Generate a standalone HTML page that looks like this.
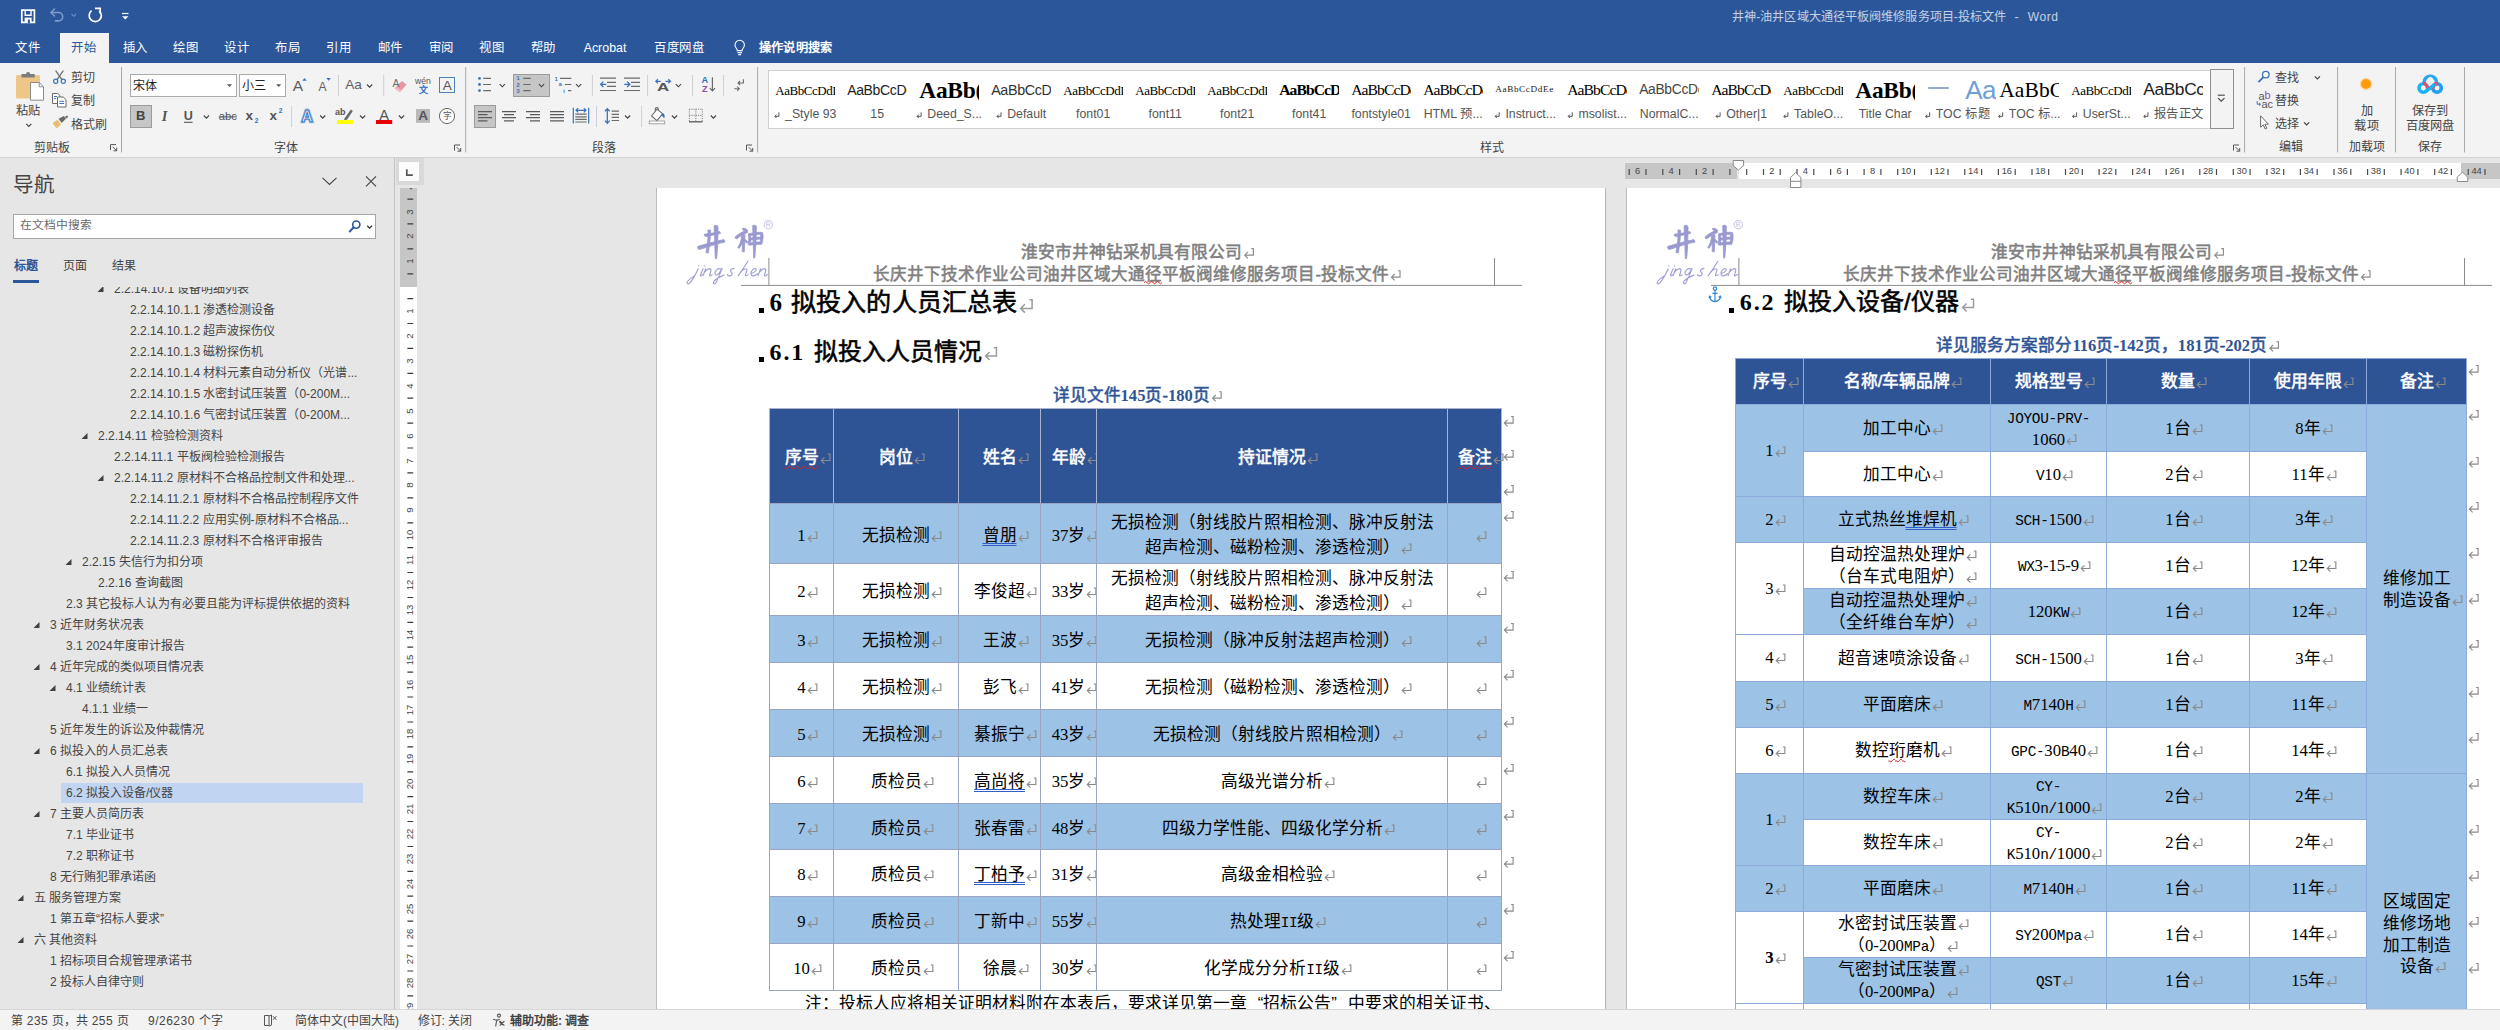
<!DOCTYPE html><html lang="zh-CN"><head><meta charset="utf-8"><title>Word</title><style>

*{box-sizing:border-box;margin:0;padding:0}
html,body{width:2500px;height:1030px;overflow:hidden;background:#e6e6e6}
body{position:relative;font-family:"Liberation Sans",sans-serif;font-size:12px;color:#444;line-height:1}
.abs{position:absolute}
.t{position:absolute;white-space:nowrap;line-height:1}
.c{position:absolute;white-space:nowrap;line-height:1;transform:translate(-50%,-50%)}
.l{position:absolute;white-space:nowrap;line-height:1;transform:translate(0,-50%)}
svg{position:absolute;overflow:visible}
svg.pm{position:static;display:inline-block;width:.68em;height:.68em;vertical-align:-0.08em;margin-left:.02em;fill:none;stroke:#8a8a8a;stroke-width:1;overflow:visible}
#titlebar{position:absolute;left:0;top:0;width:2500px;height:63px;background:#2b579a}
#ribbon{position:absolute;left:0;top:63px;width:2500px;height:95px;background:#f3f3f3;border-bottom:1px solid #d2d2d2}
#status{position:absolute;left:0;top:1009px;width:2500px;height:21px;background:#f3f3f3;border-top:1px solid #d6d6d6}
.cj{display:inline-block;white-space:nowrap;text-align:justify;text-align-last:justify;letter-spacing:0;vertical-align:baseline}
.cj1{display:inline-block;min-width:1em;text-align:center;letter-spacing:0;vertical-align:baseline}
.serif{font-family:"Liberation Serif",serif}
.mono{font-family:"Liberation Mono",monospace}


.page{position:absolute;background:#fff;overflow:hidden;border-left:1px solid #bdbdbd;border-right:1px solid #b4b4b4}
.cell{position:absolute;display:flex;align-items:center;justify-content:center;text-align:center;border:1px solid;
 font-family:"Liberation Sans",sans-serif;font-size:16.7px;color:#000;padding-top:5px;white-space:nowrap;line-height:1;overflow:visible}
.cell.r2{padding-top:1px}
.doc{font-family:"Liberation Sans",sans-serif}
.fq{display:inline-block;width:1em}
.fb{font-weight:normal;-webkit-text-stroke:.55px currentColor}
.fb .sf{font-weight:bold;-webkit-text-stroke:0}
.fb svg.pm{-webkit-text-stroke:0}
.sf{font-family:"Liberation Serif",serif}
.hg{display:inline-block;width:0;overflow:visible;white-space:nowrap;vertical-align:baseline;text-align:left}
.hg svg.pm{margin-left:1px}
.ln{font-family:"Liberation Mono",monospace;font-size:.86em;letter-spacing:-.28px;line-height:1}
svg.pm.g{stroke:#9a9a9a;width:.6em;height:.6em;margin-left:2px}
.du,.du .cj,.du .cj1{text-decoration:underline double #2f5fc4;text-decoration-thickness:1px;text-underline-offset:2px}
.sq,.sq .cj,.sq .cj1{text-decoration:underline wavy #e02020;text-decoration-thickness:1px;text-underline-offset:2px}

</style></head><body>
<div id="titlebar">
<svg style="left:0;top:0" width="200" height="33" viewBox="0 0 200 33">
<path d="M21.8 10.2h12.6v12.2h-12.6z" fill="none" stroke="#fff" stroke-width="1.7"/>
<path d="M25.2 10v5.2h5.8v-5.2" fill="none" stroke="#fff" stroke-width="1.4"/>
<rect x="24.6" y="17.6" width="7" height="5" fill="#fff"/>
<rect x="27.9" y="19.6" width="2" height="3.6" fill="#2b579a"/>
<g fill="none" stroke="#7d9acb" stroke-width="1.6" stroke-linecap="round" stroke-linejoin="round">
<path d="M51 12.5h7.5a4.2 4.2 0 0 1 0 8.4h-3"/>
<path d="M54.5 9 51 12.5 54.5 16"/>
</g>
<path d="M71.5 14l2.3 2.3 2.3-2.3" fill="none" stroke="#6f8fc4" stroke-width="1.1"/>
<g fill="none" stroke="#fff" stroke-width="1.7">
<path d="M91.6 10.6a6.1 6.1 0 1 0 7.6 .2"/>
</g>
<path d="M95 8.4h5.2v5.2" fill="none" stroke="#fff" stroke-width="1.7"/>
<path d="M122 13.5h6.5" stroke="#fff" stroke-width="1.2"/>
<path d="M122 16.2h6.5l-3.25 3.3z" fill="#fff"/>
</svg>
<div class="l" style="left:1732px;top:16.5px;font-size:12.1px;color:#c5d1e6"><span class="cj" style="min-width:2em">井神</span>-<span class="cj" style="min-width:16em">油井区域大通径平板阀维修服务项目</span>-<span class="cj" style="min-width:4em">投标文件</span><span style="letter-spacing:.8px">&nbsp; - &nbsp;</span><span style="letter-spacing:.5px">Word</span></div>
<div class="abs" style="left:60px;top:33px;width:49px;height:30px;background:#f3f3f3"></div>
<div class="c" style="left:27.9px;top:47.7px;font-size:12.4px;color:#fff"><span class="cj" style="min-width:2em">文件</span></div>
<div class="c" style="left:83.6px;top:47.7px;font-size:12.4px;color:#2b579a"><span class="cj" style="min-width:2em">开始</span></div>
<div class="c" style="left:135.0px;top:47.7px;font-size:12.4px;color:#fff"><span class="cj" style="min-width:2em">插入</span></div>
<div class="c" style="left:185.7px;top:47.7px;font-size:12.4px;color:#fff"><span class="cj" style="min-width:2em">绘图</span></div>
<div class="c" style="left:236.7px;top:47.7px;font-size:12.4px;color:#fff"><span class="cj" style="min-width:2em">设计</span></div>
<div class="c" style="left:287.7px;top:47.7px;font-size:12.4px;color:#fff"><span class="cj" style="min-width:2em">布局</span></div>
<div class="c" style="left:338.7px;top:47.7px;font-size:12.4px;color:#fff"><span class="cj" style="min-width:2em">引用</span></div>
<div class="c" style="left:390.0px;top:47.7px;font-size:12.4px;color:#fff"><span class="cj" style="min-width:2em">邮件</span></div>
<div class="c" style="left:441.0px;top:47.7px;font-size:12.4px;color:#fff"><span class="cj" style="min-width:2em">审阅</span></div>
<div class="c" style="left:491.7px;top:47.7px;font-size:12.4px;color:#fff"><span class="cj" style="min-width:2em">视图</span></div>
<div class="c" style="left:543.0px;top:47.7px;font-size:12.4px;color:#fff"><span class="cj" style="min-width:2em">帮助</span></div>
<div class="c" style="left:605.0px;top:47.7px;font-size:12.4px;color:#fff">Acrobat</div>
<div class="c" style="left:679.0px;top:47.7px;font-size:12.4px;color:#fff"><span class="cj" style="min-width:4em">百度网盘</span></div>
<svg style="left:730px;top:36px" width="20" height="24" viewBox="0 0 20 24">
<g fill="none" stroke="#fff" stroke-width="1.1">
<path d="M7.3 14.6c0-2-2.3-2.8-2.3-5.6a4.7 4.7 0 0 1 9.4 0c0 2.8-2.3 3.6-2.3 5.6z"/>
<path d="M7.5 16.6h4.4M8.3 18.6h2.8"/>
</g></svg>
<div class="l" style="left:759px;top:47.5px;font-size:12.2px;color:#fff;font-weight:bold"><span class="cj" style="min-width:6em">操作说明搜索</span></div>
</div>
<div id="ribbon"></div>
<div class="abs" style="left:130px;top:74px;width:107px;height:23px;background:#fff;border:1px solid #ababab"></div>
<div class="abs" style="left:239px;top:74px;width:47px;height:23px;background:#fff;border:1px solid #ababab"></div>
<div class="abs" style="left:439px;top:77px;width:16.3px;height:16.3px;border:1.2px solid #4d82c2"></div>
<div class="abs" style="left:130px;top:105px;width:22px;height:23px;background:#c6c6c6;border:1px solid #9b9b9b"></div>
<div class="abs" style="left:513px;top:74px;width:37px;height:23px;background:#c6c6c6;border:1px solid #9b9b9b"></div>
<div class="abs" style="left:474px;top:105px;width:22px;height:23px;background:#c6c6c6;border:1px solid #9b9b9b"></div>
<div class="abs" style="left:767.5px;top:69.5px;width:1443px;height:59.5px;background:#fff;border:1px solid #d0d0d0;border-right:none"></div>
<div class="abs" style="left:2210px;top:69px;width:23.5px;height:60px;background:#f3f3f3;border:1px solid #8f8f8f"></div>
<div class="abs" style="left:775.2px;top:72px;width:60px;height:36px;overflow:hidden"><div class="l" style="left:0;top:18.3px;font-family:'Liberation Serif',serif;font-size:13px;letter-spacing:-.45px;color:#000">AaBbCcDdI</div></div>
<div class="abs" style="left:847.2px;top:72px;width:60px;height:36px;overflow:hidden"><div class="l" style="left:0;top:18.3px;font-size:14px;color:#222;letter-spacing:-.35px">AaBbCcDc</div></div>
<div class="abs" style="left:919.2px;top:72px;width:60px;height:36px;overflow:hidden"><div class="l" style="left:0;top:18.6px;font-family:'Liberation Serif',serif;font-size:23.4px;font-weight:bold;color:#000;letter-spacing:-.2px">AaBb(</div></div>
<div class="abs" style="left:991.2px;top:72px;width:60px;height:36px;overflow:hidden"><div class="l" style="left:0;top:18.3px;font-size:14.3px;color:#333;letter-spacing:-.35px">AaBbCcD</div></div>
<div class="abs" style="left:1063.2px;top:72px;width:60px;height:36px;overflow:hidden"><div class="l" style="left:0;top:18.3px;font-family:'Liberation Serif',serif;font-size:13px;letter-spacing:-.45px;color:#000">AaBbCcDdI</div></div>
<div class="abs" style="left:1135.2px;top:72px;width:60px;height:36px;overflow:hidden"><div class="l" style="left:0;top:18.3px;font-family:'Liberation Serif',serif;font-size:13px;letter-spacing:-.45px;color:#000">AaBbCcDdI</div></div>
<div class="abs" style="left:1207.2px;top:72px;width:60px;height:36px;overflow:hidden"><div class="l" style="left:0;top:18.3px;font-family:'Liberation Serif',serif;font-size:13px;letter-spacing:-.45px;color:#000">AaBbCcDdI</div></div>
<div class="abs" style="left:1279.2px;top:72px;width:60px;height:36px;overflow:hidden"><div class="l" style="left:0;top:18.3px;font-family:'Liberation Serif',serif;font-size:15.6px;letter-spacing:-.9px;color:#000;font-weight:bold">AaBbCcDc</div></div>
<div class="abs" style="left:1351.2px;top:72px;width:60px;height:36px;overflow:hidden"><div class="l" style="left:0;top:18.3px;font-family:'Liberation Serif',serif;font-size:15.6px;letter-spacing:-.9px;color:#000">AaBbCcDc</div></div>
<div class="abs" style="left:1423.2px;top:72px;width:60px;height:36px;overflow:hidden"><div class="l" style="left:0;top:18.3px;font-family:'Liberation Serif',serif;font-size:15.6px;letter-spacing:-.9px;color:#000">AaBbCcDc</div></div>
<div class="abs" style="left:1495.2px;top:72px;width:60px;height:36px;overflow:hidden"><div class="l" style="left:0;top:18.3px;font-family:'Liberation Serif',serif;font-size:9.2px;color:#222;letter-spacing:.62px">AaBbCcDdEe</div></div>
<div class="abs" style="left:1567.2px;top:72px;width:60px;height:36px;overflow:hidden"><div class="l" style="left:0;top:18.3px;font-family:'Liberation Serif',serif;font-size:15.6px;letter-spacing:-.9px;color:#000">AaBbCcDc</div></div>
<div class="abs" style="left:1639.2px;top:72px;width:60px;height:36px;overflow:hidden"><div class="l" style="left:0;top:18.3px;font-size:13.8px;color:#444;letter-spacing:-.3px">AaBbCcDc</div></div>
<div class="abs" style="left:1711.2px;top:72px;width:60px;height:36px;overflow:hidden"><div class="l" style="left:0;top:18.3px;font-family:'Liberation Serif',serif;font-size:15.6px;letter-spacing:-.9px;color:#000">AaBbCcDc</div></div>
<div class="abs" style="left:1783.2px;top:72px;width:60px;height:36px;overflow:hidden"><div class="l" style="left:0;top:18.3px;font-family:'Liberation Serif',serif;font-size:13px;letter-spacing:-.45px;color:#000">AaBbCcDdI</div></div>
<div class="abs" style="left:1855.2px;top:72px;width:60px;height:36px;overflow:hidden"><div class="l" style="left:0;top:18.6px;font-family:'Liberation Serif',serif;font-size:23.4px;font-weight:bold;color:#000;letter-spacing:-.2px">AaBb(</div></div>
<div class="abs" style="left:1965.2px;top:72px;width:31px;height:36px;overflow:hidden"><div class="l" style="left:0;top:18.3px;font-size:26px;color:#6f9fda;letter-spacing:-.5px;font-weight:normal">Aa</div></div>
<div class="abs" style="left:1999.2px;top:72px;width:60px;height:36px;overflow:hidden"><div class="l" style="left:0;top:18.6px;font-family:'Liberation Serif',serif;font-size:21.5px;color:#000;letter-spacing:.1px">AaBbC</div></div>
<div class="abs" style="left:2071.2px;top:72px;width:60px;height:36px;overflow:hidden"><div class="l" style="left:0;top:18.3px;font-family:'Liberation Serif',serif;font-size:13px;letter-spacing:-.45px;color:#000">AaBbCcDdI</div></div>
<div class="abs" style="left:2143.2px;top:72px;width:60px;height:36px;overflow:hidden"><div class="l" style="left:0;top:18.3px;font-size:17.4px;color:#222;letter-spacing:-.4px">AaBbCc</div></div>
<svg style="left:0;top:0" width="2500" height="160" viewBox="0 0 2500 160"><rect x="16" y="75" width="24" height="23.5" rx="1.5" fill="#edc688"/>
<path d="M21.5 77.5v-3.5h4.5a2.1 2.1 0 0 1 4.2 0h4.5v3.5z" fill="#7d7d7d"/>
<path d="M30.5 82.5h8.7l4.3 4.3v13.4h-13z" fill="#fff" stroke="#8c8c8c" stroke-width="1"/>
<path d="M39.2 82.5v4.3h4.3" fill="none" stroke="#8c8c8c" stroke-width="1"/>
<path d="M26.2 123.9l2.6 2.6 2.6-2.6" fill="none" stroke="#444" stroke-width="1.15"/>
<g fill="none" stroke="#6a6a6a" stroke-width="1.3"><path d="M55.6 70.5l6.5 9.3M63.4 70.5l-6.5 9.3"/></g>
<g fill="none" stroke="#3b73b9" stroke-width="1.2"><circle cx="55.7" cy="81.3" r="2.1"/><circle cx="63.3" cy="81.3" r="2.1"/></g>
<g fill="#fff" stroke="#6a6a6a" stroke-width="1"><path d="M52.5 93.5h5.3l2.2 2.2v7.8h-7.5z"/><path d="M57.5 97h5.8l2.7 2.7v7.3h-8.5z"/></g>
<path d="M54 96.5h3M54 98.7h2.2M59.3 101.3h4.8M59.3 103.5h4.8" stroke="#3b73b9" stroke-width="1" fill="none"/>
<path d="M52.5 123l5-3.2 3.6 4.6-4.6 4z" fill="#e9bd73"/>
<path d="M58.5 118.8l5.3-2.8 2.3 2.5-4.4 4.4z" fill="#6a6a6a"/>
<path d="M65 116.6l2.3-1 .9 1.3-1.8 1.5z" fill="#6a6a6a"/>
<g fill="none" stroke="#555" stroke-width="1"><path d="M110.5 150.1v-5.5h5.5"/><path d="M112.7 146.8l4 4m0-3.2v3.2h-3.2"/></g>
<path d="M121.5 67.0V152.5" stroke="#a9a9a9" stroke-width="1"/>
<path d="M227 84.3h5l-2.5 2.7z" fill="#555"/><path d="M276.2 84.3h5l-2.5 2.7z" fill="#555"/>
<path d="M302.3 80.8h4.4l-2.2-2.8z" fill="#3b73b9"/>
<path d="M326.3 78h4.6l-2.3 2.8z" fill="#3b73b9"/>
<path d="M338.5 75.0V96.0" stroke="#cfcfcf" stroke-width="1"/>
<path d="M367.0 84.5l2.6 2.6 2.6-2.6" fill="none" stroke="#444" stroke-width="1.15"/>
<path d="M383.7 75.0V96.0" stroke="#cfcfcf" stroke-width="1"/>
<path d="M394.6 88.3l7.2-7.4 4.8 3.7-6.7 7.6z" fill="#ea96a3"/><path d="M394.6 88.3l1.6-1.6 5.3 3.8-1.6 1.7z" fill="#f3bcc4"/>
<path d="M184 122.3h8.6" stroke="#555" stroke-width="1.1"/>
<path d="M203.8 115.5l2.6 2.6 2.6-2.6" fill="none" stroke="#444" stroke-width="1.15"/>
<path d="M291.6 106.0V127.0" stroke="#cfcfcf" stroke-width="1"/>
<text x="307" y="121.5" text-anchor="middle" font-family="Liberation Sans" font-size="16" font-weight="bold" fill="#fff" stroke="#9fc0e8" stroke-width="2.6">A</text>
<text x="307" y="121.5" text-anchor="middle" font-family="Liberation Sans" font-size="16" font-weight="bold" fill="#fff" stroke="#3b78c5" stroke-width="1">A</text>
<path d="M320.1 115.5l2.6 2.6 2.6-2.6" fill="none" stroke="#444" stroke-width="1.15"/>
<path d="M344.5 118.6l6.3-9 2 1.4-5.8 8.7-2.9 .6z" fill="#6a6a6a"/>
<rect x="337" y="120" width="16.2" height="4" fill="#ffff00"/>
<path d="M360.0 115.5l2.6 2.6 2.6-2.6" fill="none" stroke="#444" stroke-width="1.15"/>
<rect x="376" y="120" width="16.2" height="4" fill="#e80000"/>
<path d="M398.9 115.5l2.6 2.6 2.6-2.6" fill="none" stroke="#444" stroke-width="1.15"/>
<rect x="416" y="109" width="14" height="13.8" fill="#b9b9b9"/>
<circle cx="447" cy="116" r="7.6" fill="#fff" stroke="#6a6a6a" stroke-width="1"/>
<g fill="none" stroke="#555" stroke-width="1"><path d="M454.5 150.5v-5.5h5.5"/><path d="M456.7 147.2l4 4m0-3.2v3.2h-3.2"/></g>
<path d="M465.7 67.0V152.5" stroke="#a9a9a9" stroke-width="1"/>
<g fill="#3b73b9"><circle cx="479.5" cy="78.4" r="1.4"/><circle cx="479.5" cy="84.5" r="1.4"/><circle cx="479.5" cy="90.6" r="1.4"/></g>
<path d="M483.2 78.4h7.8M483.2 84.5h7.8M483.2 90.6h7.8" stroke="#6a6a6a" stroke-width="1.2"/>
<path d="M499.7 84.2l2.6 2.6 2.6-2.6" fill="none" stroke="#444" stroke-width="1.15"/>
<path d="M523.3 78.4h7.4M523.3 84.5h7.4M523.3 90.6h7.4" stroke="#6a6a6a" stroke-width="1.2"/>
<text x="516.6" y="80.4" font-family="Liberation Sans" font-size="5.6" font-weight="bold" fill="#2f6fbf">1</text>
<text x="516.6" y="86.5" font-family="Liberation Sans" font-size="5.6" font-weight="bold" fill="#2f6fbf">2</text>
<text x="516.6" y="92.6" font-family="Liberation Sans" font-size="5.6" font-weight="bold" fill="#2f6fbf">3</text>
<path d="M538.9 84.2l2.6 2.6 2.6-2.6" fill="none" stroke="#444" stroke-width="1.15"/>
<text x="554.8" y="80.6" font-family="Liberation Sans" font-size="5.4" font-weight="bold" fill="#2f6fbf">1</text>
<text x="558.7" y="86.4" font-family="Liberation Sans" font-size="5.4" font-weight="bold" fill="#2f6fbf">a</text>
<text x="563.3" y="92.8" font-family="Liberation Sans" font-size="5.4" font-weight="bold" fill="#2f6fbf">i</text>
<path d="M560 78.4h11.3M565 84.5h6.3M568 90.6h3.3" stroke="#6a6a6a" stroke-width="1.2"/>
<path d="M576.0 84.2l2.6 2.6 2.6-2.6" fill="none" stroke="#444" stroke-width="1.15"/>
<path d="M592.4 75.0V96.0" stroke="#cfcfcf" stroke-width="1"/>
<path d="M600 78.2h16M607 82.3h9M607 86.4h9M600 90.5h16" stroke="#6a6a6a" stroke-width="1.2"/>
<path d="M600.7 84.3h5.6M603.4 81.6l-2.8 2.7 2.8 2.7" stroke="#3b73b9" stroke-width="1.3" fill="none"/>
<path d="M624 78.2h16M631 82.3h9M631 86.4h9M624 90.5h16" stroke="#6a6a6a" stroke-width="1.2"/>
<path d="M624.2 84.3h5.6M627.1 81.6l2.8 2.7-2.8 2.7" stroke="#3b73b9" stroke-width="1.3" fill="none"/>
<path d="M647.6 75.0V96.0" stroke="#cfcfcf" stroke-width="1"/>
<path d="M656 81.3h4.8M658 79.2l-2.2 2.1 2.2 2.1M665.5 81.3h4.8M668.3 79.2l2.2 2.1-2.2 2.1" stroke="#3b73b9" stroke-width="1.2" fill="none"/>
<path d="M675.8 84.2l2.6 2.6 2.6-2.6" fill="none" stroke="#444" stroke-width="1.15"/>
<path d="M692.6 75.0V96.0" stroke="#cfcfcf" stroke-width="1"/>
<path d="M712.4 77.2v13.6M709.8 88.2l2.6 2.7 2.6-2.7" stroke="#6a6a6a" stroke-width="1.2" fill="none"/>
<path d="M723.6 75.0V96.0" stroke="#cfcfcf" stroke-width="1"/>
<g stroke="#6a6a6a" stroke-width="1.1" fill="none"><path d="M743.4 79.3v3.7h-5.2M740 81l-2 2 2 2"/><path d="M734.3 88.7h4.8M737.2 86.6l2.1 2.1-2.1 2.1"/></g>
<path d="M478.0 111.6h14.0M478.0 114.6h9.5M478.0 117.7h14.0M478.0 120.8h9.5" stroke="#5a5a5a" stroke-width="1.2" fill="none"/>
<path d="M502.0 111.6h14.0M504.0 114.6h10.0M502.0 117.7h14.0M504.0 120.8h10.0" stroke="#5a5a5a" stroke-width="1.2" fill="none"/>
<path d="M526.0 111.6h14.0M530.0 114.6h10.0M526.0 117.7h14.0M530.0 120.8h10.0" stroke="#5a5a5a" stroke-width="1.2" fill="none"/>
<path d="M550.0 111.6h14.0M550.0 114.6h14.0M550.0 117.7h14.0M550.0 120.8h14.0" stroke="#5a5a5a" stroke-width="1.2" fill="none"/>
<path d="M573.3 107.8v15.6M588.7 107.8v15.6" stroke="#3b73b9" stroke-width="1.2"/>
<path d="M576 110.3h10M578.2 108.2l-2.2 2.1 2.2 2.1M583.8 108.2l2.2 2.1-2.2 2.1" stroke="#3b73b9" stroke-width="1.2" fill="none"/>
<path d="M575.3 114.2h11.4M575.3 116.8h11.4M575.3 119.4h11.4M575.3 122h11.4" stroke="#6a6a6a" stroke-width="1.2"/>
<path d="M596.5 106.0V127.0" stroke="#cfcfcf" stroke-width="1"/>
<path d="M607.3 108.6v14.6M604.9 111.2l2.4-2.6 2.4 2.6M604.9 120.6l2.4 2.6 2.4-2.6" stroke="#3b73b9" stroke-width="1.3" fill="none"/>
<path d="M611.6 111.2h7.4M611.6 114.3h7.4M611.6 117.4h7.4M611.6 120.5h7.4" stroke="#6a6a6a" stroke-width="1.2"/>
<path d="M625.0 115.5l2.6 2.6 2.6-2.6" fill="none" stroke="#444" stroke-width="1.15"/>
<path d="M641.6 106.0V127.0" stroke="#cfcfcf" stroke-width="1"/>
<path d="M651.5 116l5.6-6.8 5.5 4.6-5.6 6.8z" fill="#fff" stroke="#6a6a6a" stroke-width="1.1"/>
<path d="M655.3 111.3v-2.2a1.5 1.5 0 0 1 3 0v1" fill="none" stroke="#6a6a6a" stroke-width="1.1"/>
<path d="M662.7 113.3c2.2 .6 2.5 3.5 1.3 5.2-.6-1.8-1.4-2.6-3.5-2.8z" fill="#3b73b9"/>
<rect x="649.3" y="121" width="15.4" height="2.8" fill="#fff" stroke="#9b9b9b" stroke-width=".9"/>
<path d="M671.9 115.5l2.6 2.6 2.6-2.6" fill="none" stroke="#444" stroke-width="1.15"/>
<path d="M689.3 109.2h13M689.3 115.4h13M689.3 109.2v12.4M695.8 109.2v12.4M702.3 109.2v12.4" stroke="#7a7a7a" stroke-width="1" stroke-dasharray="1 1.2" fill="none"/>
<path d="M689 121.8h13.6" stroke="#555" stroke-width="1.3"/>
<path d="M710.8 115.5l2.6 2.6 2.6-2.6" fill="none" stroke="#444" stroke-width="1.15"/>
<g fill="none" stroke="#555" stroke-width="1"><path d="M746.5 150.5v-5.5h5.5"/><path d="M748.7 147.2l4 4m0-3.2v3.2h-3.2"/></g>
<path d="M757.6 67.0V152.5" stroke="#a9a9a9" stroke-width="1"/>
<path d="M2217.8 95.2h7" stroke="#444" stroke-width="1.1"/>
<path d="M2218.1 98.2l3.2 3.0 3.2-3.0" fill="none" stroke="#444" stroke-width="1.15"/>
<path d="M1928.2 88h20.5" stroke="#2f5496" stroke-width="1"/>
<g fill="none" stroke="#555" stroke-width="1"><path d="M2233.5 150.5v-5.5h5.5"/><path d="M2235.7 147.2l4 4m0-3.2v3.2h-3.2"/></g>
<path d="M2244.6 67.0V152.5" stroke="#a9a9a9" stroke-width="1"/>
<circle cx="2265.8" cy="74.6" r="3.3" fill="#fff" stroke="#3b73b9" stroke-width="1.3"/><path d="M2263.4 77.2l-5 5" stroke="#3b73b9" stroke-width="1.9"/>
<path d="M2314.8 76.3l2.6 2.6 2.6-2.6" fill="none" stroke="#444" stroke-width="1.15"/>
<path d="M2257.2 101.2v3h3.2M2259 102.8l1.5 1.4-1.5 1.4" fill="none" stroke="#3b73b9" stroke-width="1"/>
<path d="M2260.6 115.8v11.4l2.7-2.4 1.9 4.2 1.6-.7-1.9-4.1h3.5z" fill="#fff" stroke="#6a6a6a" stroke-width="1"/>
<path d="M2304.0 122.3l2.6 2.6 2.6-2.6" fill="none" stroke="#444" stroke-width="1.15"/>
<path d="M2337.6 67.0V152.5" stroke="#a9a9a9" stroke-width="1"/>
<circle cx="2366" cy="84" r="5.1" fill="#ff9a0a"/><circle cx="2366" cy="84" r="5.8" fill="none" stroke="#ffc26b" stroke-width=".9" opacity=".7"/>
<path d="M2395.5 67.0V152.5" stroke="#a9a9a9" stroke-width="1"/>
<g fill="none" stroke-width="3.6"><path d="M2424 82.5a6.3 6.3 0 0 1 12.6 0" stroke="#2aa7f0"/><circle cx="2423.3" cy="88" r="4.3" stroke="#16b4f5"/><circle cx="2437" cy="88" r="4.3" stroke="#1c9ff5"/><path d="M2424.3 82a6 6 0 0 0 12 0" stroke="#ee4a63"/></g><path d="M2425 91.8l10-7.5" stroke="#16b4f5" stroke-width="3.4"/><circle cx="2423.3" cy="88" r="2.4" fill="#f3f3f3"/><circle cx="2437" cy="88" r="2.2" fill="#f3f3f3"/><circle cx="2430.3" cy="79.5" r="2.6" fill="#f3f3f3"/>
<path d="M2464.5 67.0V152.5" stroke="#a9a9a9" stroke-width="1"/></svg>
<div class="c" style="left:28px;top:111px;font-size:12.2px"><span class="cj" style="min-width:2em">粘贴</span></div>
<div class="l" style="left:70.6px;top:78.3px;font-size:12px"><span class="cj" style="min-width:2em">剪切</span></div>
<div class="l" style="left:70.6px;top:101.4px;font-size:12px"><span class="cj" style="min-width:2em">复制</span></div>
<div class="l" style="left:70.6px;top:124.6px;font-size:12px"><span class="cj" style="min-width:3em">格式刷</span></div>
<div class="c" style="left:52px;top:147.6px;font-size:12px"><span class="cj" style="min-width:3em">剪贴板</span></div>
<div class="l" style="left:133px;top:86px;font-size:12px;color:#222"><span class="cj" style="min-width:2em">宋体</span></div>
<div class="l" style="left:242px;top:86px;font-size:12px;color:#222"><span class="cj" style="min-width:2em">小三</span></div>
<div class="c" style="left:298px;top:85.6px;font-size:15.5px;color:#5f5f5f">A</div>
<div class="c" style="left:322.6px;top:87.2px;font-size:12px;color:#5f5f5f">A</div>
<div class="c" style="left:353.6px;top:85px;font-size:13.6px;color:#5f5f5f">Aa</div>
<div class="c" style="left:396px;top:82.5px;font-size:10.5px;color:#6a6a6a">A</div>
<div class="c" style="left:423px;top:81px;font-size:8.6px;color:#555">wén</div>
<div class="c" style="left:423.3px;top:90.2px;font-size:9px;color:#2f6fbf;font-weight:bold"><span class="cj1">文</span></div>
<div class="c" style="left:447.2px;top:85.6px;font-size:13.5px;color:#555">A</div>
<div class="c" style="left:140.8px;top:115.2px;font-size:13px;font-weight:bold;color:#444">B</div>
<div class="c serif" style="left:164.5px;top:116.3px;font-size:14.5px;font-style:italic;font-weight:bold;color:#555">I</div>
<div class="c" style="left:188.2px;top:115.6px;font-size:12.6px;font-weight:bold;color:#555">U</div>
<div class="c" style="left:227.8px;top:116.5px;font-size:11.2px;color:#555;text-decoration:line-through">abc</div>
<div class="c" style="left:249.2px;top:115.8px;font-size:13.5px;font-weight:bold;color:#555">x</div>
<div class="c" style="left:256.5px;top:120.5px;font-size:6.5px;font-weight:bold;color:#2f6fbf">2</div>
<div class="c" style="left:273.2px;top:115.8px;font-size:13.5px;font-weight:bold;color:#555">x</div>
<div class="c" style="left:280.6px;top:111.2px;font-size:6.5px;font-weight:bold;color:#2f6fbf">2</div>
<div class="c" style="left:340.2px;top:112.4px;font-size:9px;font-weight:bold;color:#555">ab</div>
<div class="c" style="left:384px;top:115.2px;font-size:14.6px;color:#555">A</div>
<div class="c" style="left:423px;top:116px;font-size:13.5px;font-weight:bold;color:#555">A</div>
<div class="c" style="left:447px;top:116.3px;font-size:8.6px;color:#555"><span class="cj1">字</span></div>
<div class="c" style="left:286px;top:147.6px;font-size:12px"><span class="cj" style="min-width:2em">字体</span></div>
<div class="c" style="left:663px;top:88.4px;font-size:13.5px;font-weight:bold;color:#555;transform:translate(-50%,-50%) scale(1.25,.8)">A</div>
<div class="c" style="left:704.8px;top:81px;font-size:9.2px;font-weight:bold;color:#2f6fbf">A</div>
<div class="c" style="left:704.8px;top:89.6px;font-size:9.2px;font-weight:bold;color:#8e4db0">Z</div>
<div class="c" style="left:604px;top:147.6px;font-size:12px"><span class="cj" style="min-width:2em">段落</span></div>
<div class="c" style="left:805.2px;top:113.8px;font-size:12.3px;color:#555"><svg style="position:static;display:inline-block;width:6px;height:7px;vertical-align:-1px;margin-right:5px" viewBox="0 0 6 7"><path d="M5 .5v4H1M2.6 2.8 1 4.5l1.6 1.7" fill="none" stroke="#555" stroke-width="1"/></svg>_Style 93</div>
<div class="c" style="left:877.2px;top:113.8px;font-size:12.3px;color:#555">15</div>
<div class="c" style="left:949.2px;top:113.8px;font-size:12.3px;color:#555"><svg style="position:static;display:inline-block;width:6px;height:7px;vertical-align:-1px;margin-right:5px" viewBox="0 0 6 7"><path d="M5 .5v4H1M2.6 2.8 1 4.5l1.6 1.7" fill="none" stroke="#555" stroke-width="1"/></svg>Deed_S...</div>
<div class="c" style="left:1021.2px;top:113.8px;font-size:12.3px;color:#555"><svg style="position:static;display:inline-block;width:6px;height:7px;vertical-align:-1px;margin-right:5px" viewBox="0 0 6 7"><path d="M5 .5v4H1M2.6 2.8 1 4.5l1.6 1.7" fill="none" stroke="#555" stroke-width="1"/></svg>Default</div>
<div class="c" style="left:1093.2px;top:113.8px;font-size:12.3px;color:#555">font01</div>
<div class="c" style="left:1165.2px;top:113.8px;font-size:12.3px;color:#555">font11</div>
<div class="c" style="left:1237.2px;top:113.8px;font-size:12.3px;color:#555">font21</div>
<div class="c" style="left:1309.2px;top:113.8px;font-size:12.3px;color:#555">font41</div>
<div class="c" style="left:1381.2px;top:113.8px;font-size:12.3px;color:#555">fontstyle01</div>
<div class="c" style="left:1453.2px;top:113.8px;font-size:12.3px;color:#555">HTML <span class="cj1">预</span>...</div>
<div class="c" style="left:1525.2px;top:113.8px;font-size:12.3px;color:#555"><svg style="position:static;display:inline-block;width:6px;height:7px;vertical-align:-1px;margin-right:5px" viewBox="0 0 6 7"><path d="M5 .5v4H1M2.6 2.8 1 4.5l1.6 1.7" fill="none" stroke="#555" stroke-width="1"/></svg>Instruct...</div>
<div class="c" style="left:1597.2px;top:113.8px;font-size:12.3px;color:#555"><svg style="position:static;display:inline-block;width:6px;height:7px;vertical-align:-1px;margin-right:5px" viewBox="0 0 6 7"><path d="M5 .5v4H1M2.6 2.8 1 4.5l1.6 1.7" fill="none" stroke="#555" stroke-width="1"/></svg>msolist...</div>
<div class="c" style="left:1669.2px;top:113.8px;font-size:12.3px;color:#555">NormalC...</div>
<div class="c" style="left:1741.2px;top:113.8px;font-size:12.3px;color:#555"><svg style="position:static;display:inline-block;width:6px;height:7px;vertical-align:-1px;margin-right:5px" viewBox="0 0 6 7"><path d="M5 .5v4H1M2.6 2.8 1 4.5l1.6 1.7" fill="none" stroke="#555" stroke-width="1"/></svg>Other|1</div>
<div class="c" style="left:1813.2px;top:113.8px;font-size:12.3px;color:#555"><svg style="position:static;display:inline-block;width:6px;height:7px;vertical-align:-1px;margin-right:5px" viewBox="0 0 6 7"><path d="M5 .5v4H1M2.6 2.8 1 4.5l1.6 1.7" fill="none" stroke="#555" stroke-width="1"/></svg>TableO...</div>
<div class="c" style="left:1885.2px;top:113.8px;font-size:12.3px;color:#555">Title Char</div>
<div class="c" style="left:1957.2px;top:113.8px;font-size:12.3px;color:#555"><svg style="position:static;display:inline-block;width:6px;height:7px;vertical-align:-1px;margin-right:5px" viewBox="0 0 6 7"><path d="M5 .5v4H1M2.6 2.8 1 4.5l1.6 1.7" fill="none" stroke="#555" stroke-width="1"/></svg>TOC <span class="cj" style="min-width:2em">标题</span></div>
<div class="c" style="left:2029.2px;top:113.8px;font-size:12.3px;color:#555"><svg style="position:static;display:inline-block;width:6px;height:7px;vertical-align:-1px;margin-right:5px" viewBox="0 0 6 7"><path d="M5 .5v4H1M2.6 2.8 1 4.5l1.6 1.7" fill="none" stroke="#555" stroke-width="1"/></svg>TOC <span class="cj1">标</span>...</div>
<div class="c" style="left:2101.2px;top:113.8px;font-size:12.3px;color:#555"><svg style="position:static;display:inline-block;width:6px;height:7px;vertical-align:-1px;margin-right:5px" viewBox="0 0 6 7"><path d="M5 .5v4H1M2.6 2.8 1 4.5l1.6 1.7" fill="none" stroke="#555" stroke-width="1"/></svg>UserSt...</div>
<div class="c" style="left:2173.2px;top:113.8px;font-size:12.3px;color:#555"><svg style="position:static;display:inline-block;width:6px;height:7px;vertical-align:-1px;margin-right:5px" viewBox="0 0 6 7"><path d="M5 .5v4H1M2.6 2.8 1 4.5l1.6 1.7" fill="none" stroke="#555" stroke-width="1"/></svg><span class="cj" style="min-width:4em">报告正文</span></div>
<div class="c" style="left:1492px;top:147.6px;font-size:12px"><span class="cj" style="min-width:2em">样式</span></div>
<div class="l" style="left:2275px;top:78px;font-size:12px"><span class="cj" style="min-width:2em">查找</span></div>
<div class="c" style="left:2261.6px;top:95.8px;font-size:11px;color:#555">a</div>
<div class="c" style="left:2267.6px;top:95.2px;font-size:11px;color:#8e4db0">b</div>
<div class="c" style="left:2267.3px;top:104.4px;font-size:11px;color:#555">ac</div>
<div class="l" style="left:2275px;top:100.8px;font-size:12px"><span class="cj" style="min-width:2em">替换</span></div>
<div class="l" style="left:2275px;top:123.6px;font-size:12px"><span class="cj" style="min-width:2em">选择</span></div>
<div class="c" style="left:2291px;top:147.3px;font-size:12px"><span class="cj" style="min-width:2em">编辑</span></div>
<div class="c" style="left:2366.6px;top:111px;font-size:12.2px"><span class="cj1">加</span></div>
<div class="c" style="left:2366.6px;top:125.8px;font-size:12.2px"><span class="cj" style="min-width:2em">载项</span></div>
<div class="c" style="left:2366.6px;top:147.3px;font-size:12px"><span class="cj" style="min-width:3em">加载项</span></div>
<div class="c" style="left:2430px;top:110.8px;font-size:12.2px"><span class="cj" style="min-width:3em">保存到</span></div>
<div class="c" style="left:2430px;top:125.8px;font-size:12.2px"><span class="cj" style="min-width:4em">百度网盘</span></div>
<div class="c" style="left:2430px;top:147.3px;font-size:12px"><span class="cj" style="min-width:2em">保存</span></div>
<div class="abs" style="left:0;top:158px;width:395px;height:851px;background:#e6e6e6"></div>
<div class="abs" style="left:394px;top:158px;width:1px;height:851px;background:#c2c2c2"></div>
<div class="l" style="left:12.6px;top:184.6px;font-size:20.6px;color:#444"><span class="cj" style="min-width:2em">导航</span></div>
<div class="abs" style="left:13px;top:214px;width:363px;height:25px;background:#fff;border:1px solid #a6a6a6"></div>
<svg style="left:0;top:0" width="400" height="300" viewBox="0 0 400 300"><path d="M322.5 177.8l7 6.6 7-6.6" fill="none" stroke="#444" stroke-width="1.1"/><path d="M366 176.3l10 10m0-10l-10 10" stroke="#444" stroke-width="1.1"/><circle cx="356.3" cy="224.6" r="3.6" fill="none" stroke="#2b579a" stroke-width="1.6"/><path d="M353.8 227.3l-4.6 4.8" stroke="#2b579a" stroke-width="2"/><path d="M367.2 225.8l2.4 2.4 2.4-2.4" fill="none" stroke="#333" stroke-width="1.25"/></svg>
<div class="l" style="left:20px;top:226px;font-size:11.8px;color:#6a6a6a"><span class="cj" style="min-width:6em">在文档中搜索</span></div>
<div class="l" style="left:13.5px;top:266px;font-size:12px;color:#2b579a;font-weight:bold"><span class="cj" style="min-width:2em">标题</span></div>
<div class="abs" style="left:13px;top:279.6px;width:26px;height:3px;background:#2b579a"></div>
<div class="l" style="left:63px;top:266px;font-size:12px;color:#444"><span class="cj" style="min-width:2em">页面</span></div>
<div class="l" style="left:111.5px;top:266px;font-size:12px;color:#444"><span class="cj" style="min-width:2em">结果</span></div>
<div class="abs" style="left:0;top:287px;width:395px;height:722px;overflow:hidden">
<div class="l" style="left:114.0px;top:2.1px;font-size:12px;color:#444">2.2.14.10.1 <span class="cj" style="min-width:6em">设备明细列表</span></div>
<div class="l" style="left:130.0px;top:23.1px;font-size:12px;color:#444">2.2.14.10.1.1 <span class="cj" style="min-width:6em">渗透检测设备</span></div>
<div class="l" style="left:130.0px;top:44.1px;font-size:12px;color:#444">2.2.14.10.1.2 <span class="cj" style="min-width:6em">超声波探伤仪</span></div>
<div class="l" style="left:130.0px;top:65.1px;font-size:12px;color:#444">2.2.14.10.1.3 <span class="cj" style="min-width:5em">磁粉探伤机</span></div>
<div class="l" style="left:130.0px;top:86.1px;font-size:12px;color:#444">2.2.14.10.1.4 <span class="cj" style="min-width:12em">材料元素自动分析仪（光谱</span>...</div>
<div class="l" style="left:130.0px;top:107.1px;font-size:12px;color:#444">2.2.14.10.1.5 <span class="cj" style="min-width:8em">水密封试压装置（</span>0-200M...</div>
<div class="l" style="left:130.0px;top:128.1px;font-size:12px;color:#444">2.2.14.10.1.6 <span class="cj" style="min-width:8em">气密封试压装置（</span>0-200M...</div>
<div class="l" style="left:98.0px;top:149.1px;font-size:12px;color:#444">2.2.14.11 <span class="cj" style="min-width:6em">检验检测资料</span></div>
<div class="l" style="left:114.0px;top:170.1px;font-size:12px;color:#444">2.2.14.11.1 <span class="cj" style="min-width:9em">平板阀检验检测报告</span></div>
<div class="l" style="left:114.0px;top:191.1px;font-size:12px;color:#444">2.2.14.11.2 <span class="cj" style="min-width:14em">原材料不合格品控制文件和处理</span>...</div>
<div class="l" style="left:130.0px;top:212.1px;font-size:12px;color:#444">2.2.14.11.2.1 <span class="cj" style="min-width:13em">原材料不合格品控制程序文件</span></div>
<div class="l" style="left:130.0px;top:233.1px;font-size:12px;color:#444">2.2.14.11.2.2 <span class="cj" style="min-width:4em">应用实例</span>-<span class="cj" style="min-width:7em">原材料不合格品</span>...</div>
<div class="l" style="left:130.0px;top:254.1px;font-size:12px;color:#444">2.2.14.11.2.3 <span class="cj" style="min-width:10em">原材料不合格评审报告</span></div>
<div class="l" style="left:82.0px;top:275.1px;font-size:12px;color:#444">2.2.15 <span class="cj" style="min-width:7em">失信行为扣分项</span></div>
<div class="l" style="left:98.0px;top:296.1px;font-size:12px;color:#444">2.2.16 <span class="cj" style="min-width:4em">查询截图</span></div>
<div class="l" style="left:66.0px;top:317.1px;font-size:12px;color:#444">2.3 <span class="cj" style="min-width:22em">其它投标人认为有必要且能为评标提供依据的资料</span></div>
<div class="l" style="left:50.0px;top:338.1px;font-size:12px;color:#444">3 <span class="cj" style="min-width:7em">近年财务状况表</span></div>
<div class="l" style="left:66.0px;top:359.1px;font-size:12px;color:#444">3.1 2024<span class="cj" style="min-width:6em">年度审计报告</span></div>
<div class="l" style="left:50.0px;top:380.1px;font-size:12px;color:#444">4 <span class="cj" style="min-width:12em">近年完成的类似项目情况表</span></div>
<div class="l" style="left:66.0px;top:401.1px;font-size:12px;color:#444">4.1 <span class="cj" style="min-width:5em">业绩统计表</span></div>
<div class="l" style="left:82.0px;top:422.1px;font-size:12px;color:#444">4.1.1 <span class="cj" style="min-width:3em">业绩一</span></div>
<div class="l" style="left:50.0px;top:443.1px;font-size:12px;color:#444">5 <span class="cj" style="min-width:12em">近年发生的诉讼及仲裁情况</span></div>
<div class="l" style="left:50.0px;top:464.1px;font-size:12px;color:#444">6 <span class="cj" style="min-width:9em">拟投入的人员汇总表</span></div>
<div class="l" style="left:66.0px;top:485.1px;font-size:12px;color:#444">6.1 <span class="cj" style="min-width:7em">拟投入人员情况</span></div>
<div class="abs" style="left:61px;top:496.2px;width:302px;height:19.5px;background:#c1d4f1"></div>
<div class="l" style="left:66.0px;top:506.1px;font-size:12px;color:#444">6.2 <span class="cj" style="min-width:5em">拟投入设备</span>/<span class="cj" style="min-width:2em">仪器</span></div>
<div class="l" style="left:50.0px;top:527.1px;font-size:12px;color:#444">7 <span class="cj" style="min-width:7em">主要人员简历表</span></div>
<div class="l" style="left:66.0px;top:548.1px;font-size:12px;color:#444">7.1 <span class="cj" style="min-width:4em">毕业证书</span></div>
<div class="l" style="left:66.0px;top:569.1px;font-size:12px;color:#444">7.2 <span class="cj" style="min-width:4em">职称证书</span></div>
<div class="l" style="left:50.0px;top:590.1px;font-size:12px;color:#444">8 <span class="cj" style="min-width:8em">无行贿犯罪承诺函</span></div>
<div class="l" style="left:34.0px;top:611.1px;font-size:12px;color:#444"><span class="cj1">五</span> <span class="cj" style="min-width:6em">服务管理方案</span></div>
<div class="l" style="left:50.0px;top:632.1px;font-size:12px;color:#444">1 <span class="cj" style="min-width:3em">第五章</span>“<span class="cj" style="min-width:5em">招标人要求</span>”</div>
<div class="l" style="left:34.0px;top:653.1px;font-size:12px;color:#444"><span class="cj1">六</span> <span class="cj" style="min-width:4em">其他资料</span></div>
<div class="l" style="left:50.0px;top:674.1px;font-size:12px;color:#444">1 <span class="cj" style="min-width:11em">招标项目合规管理承诺书</span></div>
<div class="l" style="left:50.0px;top:695.1px;font-size:12px;color:#444">2 <span class="cj" style="min-width:7em">投标人自律守则</span></div>
<svg style="left:0;top:0" width="395" height="722" viewBox="0 0 395 722"><path d="M103.5 4.9h-6l6-6z" fill="#404040"/><path d="M87.5 151.9h-6l6-6z" fill="#404040"/><path d="M103.5 193.9h-6l6-6z" fill="#404040"/><path d="M71.5 277.9h-6l6-6z" fill="#404040"/><path d="M39.5 340.9h-6l6-6z" fill="#404040"/><path d="M39.5 382.9h-6l6-6z" fill="#404040"/><path d="M55.5 403.9h-6l6-6z" fill="#404040"/><path d="M39.5 466.9h-6l6-6z" fill="#404040"/><path d="M39.5 529.9h-6l6-6z" fill="#404040"/><path d="M23.5 613.9h-6l6-6z" fill="#404040"/><path d="M23.5 655.9h-6l6-6z" fill="#404040"/></svg>
</div>
<div class="abs" style="left:396px;top:158px;width:28px;height:27px;background:#d9d9d9"></div>
<div class="abs" style="left:399px;top:162px;width:20px;height:19px;background:#fbfbfb"></div>
<svg style="left:396px;top:158px" width="28" height="27"><path d="M10.8 11.2v6h6" fill="none" stroke="#555" stroke-width="1.7"/></svg>
<div class="abs" style="left:400px;top:188px;width:17px;height:99px;background:#c6c6c6"></div>
<div class="abs" style="left:400px;top:287px;width:17px;height:722px;background:#fff"></div>
<div class="abs" style="left:396px;top:188px;width:26px;height:821px;overflow:hidden"><svg style="left:0;top:0" width="26" height="821" viewBox="0 0 26 821"><path d="M11.4 11.1h5.8M11.4 35.9h5.8M11.4 60.8h5.8M11.4 85.8h5.8M11.4 110.6h5.8M11.4 135.5h5.8M11.4 160.4h5.8M11.4 185.3h5.8M11.4 210.2h5.8M11.4 235.1h5.8M11.4 260.0h5.8M11.4 284.9h5.8M11.4 309.8h5.8M11.4 334.8h5.8M11.4 359.6h5.8M11.4 384.5h5.8M11.4 409.5h5.8M11.4 434.3h5.8M11.4 459.2h5.8M11.4 484.1h5.8M11.4 509.0h5.8M11.4 534.0h5.8M11.4 558.8h5.8M11.4 583.8h5.8M11.4 608.6h5.8M11.4 633.5h5.8M11.4 658.5h5.8M11.4 683.3h5.8M11.4 708.2h5.8M11.4 733.1h5.8M11.4 758.0h5.8M11.4 783.0h5.8M11.4 807.8h5.8" stroke="#3a3a3a" stroke-width="1.2"/></svg><div class="c" style="left:13.8px;top:-1.4px;font-size:9.5px;color:#444;transform:translate(-50%,-50%) rotate(-90deg)">4</div><div class="c" style="left:13.8px;top:23.5px;font-size:9.5px;color:#444;transform:translate(-50%,-50%) rotate(-90deg)">3</div><div class="c" style="left:13.8px;top:48.4px;font-size:9.5px;color:#444;transform:translate(-50%,-50%) rotate(-90deg)">2</div><div class="c" style="left:13.8px;top:73.3px;font-size:9.5px;color:#444;transform:translate(-50%,-50%) rotate(-90deg)">1</div><div class="c" style="left:13.8px;top:123.1px;font-size:9.5px;color:#444;transform:translate(-50%,-50%) rotate(-90deg)">1</div><div class="c" style="left:13.8px;top:148.0px;font-size:9.5px;color:#444;transform:translate(-50%,-50%) rotate(-90deg)">2</div><div class="c" style="left:13.8px;top:172.9px;font-size:9.5px;color:#444;transform:translate(-50%,-50%) rotate(-90deg)">3</div><div class="c" style="left:13.8px;top:197.8px;font-size:9.5px;color:#444;transform:translate(-50%,-50%) rotate(-90deg)">4</div><div class="c" style="left:13.8px;top:222.7px;font-size:9.5px;color:#444;transform:translate(-50%,-50%) rotate(-90deg)">5</div><div class="c" style="left:13.8px;top:247.6px;font-size:9.5px;color:#444;transform:translate(-50%,-50%) rotate(-90deg)">6</div><div class="c" style="left:13.8px;top:272.5px;font-size:9.5px;color:#444;transform:translate(-50%,-50%) rotate(-90deg)">7</div><div class="c" style="left:13.8px;top:297.4px;font-size:9.5px;color:#444;transform:translate(-50%,-50%) rotate(-90deg)">8</div><div class="c" style="left:13.8px;top:322.3px;font-size:9.5px;color:#444;transform:translate(-50%,-50%) rotate(-90deg)">9</div><div class="c" style="left:13.8px;top:347.2px;font-size:9.5px;color:#444;transform:translate(-50%,-50%) rotate(-90deg)">10</div><div class="c" style="left:13.8px;top:372.1px;font-size:9.5px;color:#444;transform:translate(-50%,-50%) rotate(-90deg)">11</div><div class="c" style="left:13.8px;top:397.0px;font-size:9.5px;color:#444;transform:translate(-50%,-50%) rotate(-90deg)">12</div><div class="c" style="left:13.8px;top:421.9px;font-size:9.5px;color:#444;transform:translate(-50%,-50%) rotate(-90deg)">13</div><div class="c" style="left:13.8px;top:446.8px;font-size:9.5px;color:#444;transform:translate(-50%,-50%) rotate(-90deg)">14</div><div class="c" style="left:13.8px;top:471.7px;font-size:9.5px;color:#444;transform:translate(-50%,-50%) rotate(-90deg)">15</div><div class="c" style="left:13.8px;top:496.6px;font-size:9.5px;color:#444;transform:translate(-50%,-50%) rotate(-90deg)">16</div><div class="c" style="left:13.8px;top:521.5px;font-size:9.5px;color:#444;transform:translate(-50%,-50%) rotate(-90deg)">17</div><div class="c" style="left:13.8px;top:546.4px;font-size:9.5px;color:#444;transform:translate(-50%,-50%) rotate(-90deg)">18</div><div class="c" style="left:13.8px;top:571.3px;font-size:9.5px;color:#444;transform:translate(-50%,-50%) rotate(-90deg)">19</div><div class="c" style="left:13.8px;top:596.2px;font-size:9.5px;color:#444;transform:translate(-50%,-50%) rotate(-90deg)">20</div><div class="c" style="left:13.8px;top:621.1px;font-size:9.5px;color:#444;transform:translate(-50%,-50%) rotate(-90deg)">21</div><div class="c" style="left:13.8px;top:646.0px;font-size:9.5px;color:#444;transform:translate(-50%,-50%) rotate(-90deg)">22</div><div class="c" style="left:13.8px;top:670.9px;font-size:9.5px;color:#444;transform:translate(-50%,-50%) rotate(-90deg)">23</div><div class="c" style="left:13.8px;top:695.8px;font-size:9.5px;color:#444;transform:translate(-50%,-50%) rotate(-90deg)">24</div><div class="c" style="left:13.8px;top:720.7px;font-size:9.5px;color:#444;transform:translate(-50%,-50%) rotate(-90deg)">25</div><div class="c" style="left:13.8px;top:745.6px;font-size:9.5px;color:#444;transform:translate(-50%,-50%) rotate(-90deg)">26</div><div class="c" style="left:13.8px;top:770.5px;font-size:9.5px;color:#444;transform:translate(-50%,-50%) rotate(-90deg)">27</div><div class="c" style="left:13.8px;top:795.4px;font-size:9.5px;color:#444;transform:translate(-50%,-50%) rotate(-90deg)">28</div><div class="c" style="left:13.8px;top:820.3px;font-size:9.5px;color:#444;transform:translate(-50%,-50%) rotate(-90deg)">29</div></div>
<div class="abs" style="left:1625px;top:163px;width:112px;height:16px;background:#c6c6c6"></div>
<div class="abs" style="left:1739px;top:163px;width:722px;height:16px;background:#fff"></div>
<div class="abs" style="left:2461px;top:163px;width:39px;height:16px;background:#c6c6c6"></div>
<svg style="left:0;top:0" width="2500" height="190" viewBox="0 0 2500 190"><path d="M1629.2 169v6M1646.0 169v6M1662.8 169v6M1679.6 169v6M1696.3 169v6M1713.1 169v6M1729.9 169v6M1746.7 169v6M1763.5 169v6M1780.2 169v6M1797.0 169v6M1813.8 169v6M1830.6 169v6M1847.4 169v6M1864.1 169v6M1880.9 169v6M1897.7 169v6M1914.5 169v6M1931.3 169v6M1948.0 169v6M1964.8 169v6M1981.6 169v6M1998.4 169v6M2015.2 169v6M2032.0 169v6M2048.7 169v6M2065.5 169v6M2082.3 169v6M2099.1 169v6M2115.8 169v6M2132.6 169v6M2149.4 169v6M2166.2 169v6M2183.0 169v6M2199.8 169v6M2216.5 169v6M2233.3 169v6M2250.1 169v6M2266.9 169v6M2283.7 169v6M2300.4 169v6M2317.2 169v6M2334.0 169v6M2350.8 169v6M2367.6 169v6M2384.3 169v6M2401.1 169v6M2417.9 169v6M2434.7 169v6M2451.4 169v6M2468.2 169v6M2485.0 169v6" stroke="#4a4a4a" stroke-width="1.2"/><path d="M1733.2 160.5h10.4v5l-5.2 4.6-5.2-4.6z" fill="#fff" stroke="#8a8a8a" stroke-width="1"/><path d="M1790.5 187.5v-10l5.2-5 5.2 5v10zM1790.5 181.3h10.4" fill="#fff" stroke="#8a8a8a" stroke-width="1"/><path d="M2457.2 181.5v-4.3l5.3-5 5.3 5v4.3z" fill="#fff" stroke="#8a8a8a" stroke-width="1"/></svg>
<div class="c" style="left:1637.6px;top:171.8px;font-size:9.3px;color:#444">6</div>
<div class="c" style="left:1671.2px;top:171.8px;font-size:9.3px;color:#444">4</div>
<div class="c" style="left:1704.7px;top:171.8px;font-size:9.3px;color:#444">2</div>
<div class="c" style="left:1771.9px;top:171.8px;font-size:9.3px;color:#444">2</div>
<div class="c" style="left:1805.4px;top:171.8px;font-size:9.3px;color:#444">4</div>
<div class="c" style="left:1839.0px;top:171.8px;font-size:9.3px;color:#444">6</div>
<div class="c" style="left:1872.5px;top:171.8px;font-size:9.3px;color:#444">8</div>
<div class="c" style="left:1906.1px;top:171.8px;font-size:9.3px;color:#444">10</div>
<div class="c" style="left:1939.7px;top:171.8px;font-size:9.3px;color:#444">12</div>
<div class="c" style="left:1973.2px;top:171.8px;font-size:9.3px;color:#444">14</div>
<div class="c" style="left:2006.8px;top:171.8px;font-size:9.3px;color:#444">16</div>
<div class="c" style="left:2040.3px;top:171.8px;font-size:9.3px;color:#444">18</div>
<div class="c" style="left:2073.9px;top:171.8px;font-size:9.3px;color:#444">20</div>
<div class="c" style="left:2107.5px;top:171.8px;font-size:9.3px;color:#444">22</div>
<div class="c" style="left:2141.0px;top:171.8px;font-size:9.3px;color:#444">24</div>
<div class="c" style="left:2174.6px;top:171.8px;font-size:9.3px;color:#444">26</div>
<div class="c" style="left:2208.1px;top:171.8px;font-size:9.3px;color:#444">28</div>
<div class="c" style="left:2241.7px;top:171.8px;font-size:9.3px;color:#444">30</div>
<div class="c" style="left:2275.3px;top:171.8px;font-size:9.3px;color:#444">32</div>
<div class="c" style="left:2308.8px;top:171.8px;font-size:9.3px;color:#444">34</div>
<div class="c" style="left:2342.4px;top:171.8px;font-size:9.3px;color:#444">36</div>
<div class="c" style="left:2375.9px;top:171.8px;font-size:9.3px;color:#444">38</div>
<div class="c" style="left:2409.5px;top:171.8px;font-size:9.3px;color:#444">40</div>
<div class="c" style="left:2443.1px;top:171.8px;font-size:9.3px;color:#444">42</div>
<div class="c" style="left:2476.6px;top:171.8px;font-size:9.3px;color:#444">44</div>
<div class="page" style="left:656px;top:188px;width:950px;height:821px">
<svg style="left:23.0px;top:27.0px" width="100" height="75" viewBox="0 0 1373 1030"><g fill="#9a9ad0" stroke="#9a9ad0" stroke-width="11" stroke-linejoin="round"><path d="M338 262C400 262 480 240 548 228L556 252C490 266 420 286 352 296C332 292 328 272 338 262Z"/><path d="M243 432C330 408 480 362 604 338L618 372C520 388 380 440 275 472C248 476 236 452 243 432Z"/><path d="M384 204L420 210C418 320 404 440 388 522L356 516C378 420 388 310 384 204Z"/><path d="M468 150C486 138 508 138 522 158C522 300 518 480 502 602L484 596C480 450 476 300 468 150Z"/><path d="M858 184C890 176 918 192 930 216C902 228 878 216 862 204Z"/><path d="M918 206C872 226 800 256 758 300C752 322 768 334 790 322C822 292 876 264 928 240Z"/><path d="M848 282L892 270C890 350 888 430 882 508L854 502C858 420 856 350 848 282Z"/><path d="M846 300C838 360 820 410 792 446L812 458C842 420 864 370 874 318Z"/><path d="M890 330L932 372L914 388L884 350Z"/><path d="M938 260C1000 244 1070 234 1132 238C1148 290 1142 350 1122 402L1094 396C1108 350 1112 306 1104 266C1050 266 1000 276 966 284C970 320 970 370 962 412L934 406C946 360 946 310 938 260Z"/><path d="M960 318C1010 308 1060 303 1110 303L1110 330C1060 332 1010 337 962 347Z"/><path d="M958 383C1010 373 1060 370 1116 370L1112 400C1060 400 1010 404 958 414Z"/><path d="M998 146C1014 138 1036 138 1048 150C1048 300 1042 450 1026 592L1010 588C1008 450 1004 300 998 146Z"/></g><circle cx="1213" cy="133" r="58" fill="none" stroke="#b4b4dc" stroke-width="11"/><path d="M1192 165V100H1218C1240 100 1240 132 1218 132H1192M1218 132L1238 165" fill="none" stroke="#b4b4dc" stroke-width="9"/><g fill="none" stroke="#a0a0d6" stroke-width="16" stroke-linecap="round" stroke-linejoin="round"><path d="M250 738C222 800 182 880 132 936C112 956 90 946 100 920C116 888 162 858 204 830"/><path d="M318 738C302 772 286 802 281 826C281 842 296 836 312 820"/><path d="M352 738C342 772 326 806 316 832M336 788C362 752 402 726 422 742C436 756 412 800 406 826C406 842 426 836 442 820"/><path d="M562 742C522 722 470 772 482 812C492 842 542 812 566 752M578 736C552 800 522 880 492 932C472 956 450 946 460 920C480 886 540 852 604 826"/><path d="M742 732C702 736 680 760 700 780C726 800 722 832 682 836C662 836 650 826 655 816"/><path d="M932 636C892 700 832 790 800 832M830 792C860 752 900 726 916 744C930 760 902 800 898 826C898 840 916 836 936 818"/><path d="M976 802C1010 796 1052 770 1046 746C1040 726 1000 736 980 776C966 810 980 842 1010 836C1032 832 1050 820 1066 806"/><path d="M1106 738C1096 772 1080 806 1072 832M1090 788C1116 752 1156 726 1174 742C1188 756 1166 800 1160 826C1160 842 1180 836 1200 816"/></g><circle cx="258" cy="700" r="9" fill="#a4a4d8"/><circle cx="336" cy="700" r="9" fill="#a4a4d8"/></svg><div class="c doc fb" style="left:474.5px;top:64.7px;font-size:16.7px;color:#7f7f7f"><span class="cj" style="min-width:13em">淮安市井神钻采机具有限公司</span><span class="hg"><svg class="pm " viewBox="0 0 10 10"><path d="M6.9 .9h1.8v5.7H1.1M3.9 3.8 1.1 6.6 3.9 9.4"/></svg></span></div><div class="c doc fb" style="left:474.2px;top:86.8px;font-size:16.55px;color:#7f7f7f"><span class="cj" style="min-width:26em">长庆井下技术作业公司油井区域大通径平板阀维修服务项目</span>-<span class="cj" style="min-width:4em">投标文件</span><span class="hg"><svg class="pm " viewBox="0 0 10 10"><path d="M6.9 .9h1.8v5.7H1.1M3.9 3.8 1.1 6.6 3.9 9.4"/></svg></span></div><svg style="left:0;top:0" width="960" height="120" viewBox="0 0 960 120"><path d="M111.9 70.0V97.4M837.5 70.0V97.4M84.0 97.4H865.0" stroke="#8c8c8c" stroke-width="1" fill="none"/><path d="M487.0 94.6q1.5-2.4 3 0t3 0 3 0 3 0 3 0 3 0" stroke="#e02020" stroke-width="1" fill="none"/></svg>
<div class="abs" style="left:102.3px;top:120.0px;width:5px;height:5px;background:#000"></div>
<div class="l doc fb" style="left:112.6px;top:115.4px;font-size:25.1px;color:#000"><span style="letter-spacing:1px"><span class="sf">6</span> </span><span class="cj" style="min-width:9em">拟投入的人员汇总表</span><svg class="pm g" viewBox="0 0 10 10"><path d="M6.9 .9h1.8v5.7H1.1M3.9 3.8 1.1 6.6 3.9 9.4"/></svg></div>
<div class="abs" style="left:102.3px;top:168.8px;width:5px;height:5px;background:#000"></div>
<div class="l doc fb" style="left:112.6px;top:163.6px;font-size:23.9px;color:#000"><span style="letter-spacing:1.9px"><span class="sf">6.1</span> </span><span class="cj" style="min-width:7em">拟投入人员情况</span><svg class="pm g" viewBox="0 0 10 10"><path d="M6.9 .9h1.8v5.7H1.1M3.9 3.8 1.1 6.6 3.9 9.4"/></svg></div>
<div class="c doc fb" style="left:474.2px;top:208.3px;font-size:16.6px;color:#2f5496"><span class="cj" style="min-width:4em">详见文件</span><span class="sf">145</span><span class="cj1">页</span>-<span class="sf">180</span><span class="cj1">页</span><span class="hg"><svg class="pm " viewBox="0 0 10 10"><path d="M6.9 .9h1.8v5.7H1.1M3.9 3.8 1.1 6.6 3.9 9.4"/></svg></span></div>
<div class="cell fb" style="left:112.0px;top:220.0px;width:65.0px;height:96.0px;background:#2f5496;border-color:#a9b3cc;color:#fff;font-size:16.8px;"><span><span class="sq"><span class="cj" style="min-width:2em">序号</span></span><span class="hg"><svg class="pm " viewBox="0 0 10 10"><path d="M6.9 .9h1.8v5.7H1.1M3.9 3.8 1.1 6.6 3.9 9.4"/></svg></span></span></div>
<div class="cell fb" style="left:176.0px;top:220.0px;width:126.0px;height:96.0px;background:#2f5496;border-color:#a9b3cc;color:#fff;font-size:16.8px;"><span><span class="cj" style="min-width:2em">岗位</span><span class="hg"><svg class="pm " viewBox="0 0 10 10"><path d="M6.9 .9h1.8v5.7H1.1M3.9 3.8 1.1 6.6 3.9 9.4"/></svg></span></span></div>
<div class="cell fb" style="left:301.0px;top:220.0px;width:83.0px;height:96.0px;background:#2f5496;border-color:#a9b3cc;color:#fff;font-size:16.8px;"><span><span class="cj" style="min-width:2em">姓名</span><span class="hg"><svg class="pm " viewBox="0 0 10 10"><path d="M6.9 .9h1.8v5.7H1.1M3.9 3.8 1.1 6.6 3.9 9.4"/></svg></span></span></div>
<div class="cell fb" style="left:383.0px;top:220.0px;width:57.0px;height:96.0px;background:#2f5496;border-color:#a9b3cc;color:#fff;font-size:16.8px;"><span><span class="cj" style="min-width:2em">年龄</span><span class="hg"><svg class="pm " viewBox="0 0 10 10"><path d="M6.9 .9h1.8v5.7H1.1M3.9 3.8 1.1 6.6 3.9 9.4"/></svg></span></span></div>
<div class="cell fb" style="left:439.0px;top:220.0px;width:352.0px;height:96.0px;background:#2f5496;border-color:#a9b3cc;color:#fff;font-size:16.8px;"><span><span class="cj" style="min-width:4em">持证情况</span><span class="hg"><svg class="pm " viewBox="0 0 10 10"><path d="M6.9 .9h1.8v5.7H1.1M3.9 3.8 1.1 6.6 3.9 9.4"/></svg></span></span></div>
<div class="cell fb" style="left:790.0px;top:220.0px;width:55.0px;height:96.0px;background:#2f5496;border-color:#a9b3cc;color:#fff;font-size:16.8px;"><span><span class="sq"><span class="cj" style="min-width:2em">备注</span></span><span class="hg"><svg class="pm " viewBox="0 0 10 10"><path d="M6.9 .9h1.8v5.7H1.1M3.9 3.8 1.1 6.6 3.9 9.4"/></svg></span></span></div>
<div class="cell " style="left:112.0px;top:315.0px;width:65.0px;height:61.0px;background:#9cc2e5;border-color:#9aa5c4;line-height:24.6px;"><span><span class="sf">1</span><span class="hg"><svg class="pm " viewBox="0 0 10 10"><path d="M6.9 .9h1.8v5.7H1.1M3.9 3.8 1.1 6.6 3.9 9.4"/></svg></span></span></div>
<div class="cell " style="left:176.0px;top:315.0px;width:126.0px;height:61.0px;background:#9cc2e5;border-color:#9aa5c4;line-height:24.6px;"><span><span class="cj" style="min-width:4em">无损检测</span><span class="hg"><svg class="pm " viewBox="0 0 10 10"><path d="M6.9 .9h1.8v5.7H1.1M3.9 3.8 1.1 6.6 3.9 9.4"/></svg></span></span></div>
<div class="cell " style="left:301.0px;top:315.0px;width:83.0px;height:61.0px;background:#9cc2e5;border-color:#9aa5c4;line-height:24.6px;"><span><span class="du"><span class="cj" style="min-width:2em">曾朋</span></span><span class="hg"><svg class="pm " viewBox="0 0 10 10"><path d="M6.9 .9h1.8v5.7H1.1M3.9 3.8 1.1 6.6 3.9 9.4"/></svg></span></span></div>
<div class="cell " style="left:383.0px;top:315.0px;width:57.0px;height:61.0px;background:#9cc2e5;border-color:#9aa5c4;line-height:24.6px;"><span><span class="sf">37</span><span class="cj1">岁</span><span class="hg"><svg class="pm " viewBox="0 0 10 10"><path d="M6.9 .9h1.8v5.7H1.1M3.9 3.8 1.1 6.6 3.9 9.4"/></svg></span></span></div>
<div class="cell " style="left:439.0px;top:315.0px;width:352.0px;height:61.0px;background:#9cc2e5;border-color:#9aa5c4;line-height:24.6px;"><span><span class="cj" style="min-width:19em">无损检测（射线胶片照相检测、脉冲反射法</span><br><span class="cj" style="min-width:15em">超声检测、磁粉检测、渗透检测）</span><span class="hg"><svg class="pm " viewBox="0 0 10 10"><path d="M6.9 .9h1.8v5.7H1.1M3.9 3.8 1.1 6.6 3.9 9.4"/></svg></span></span></div>
<div class="cell " style="left:790.0px;top:315.0px;width:55.0px;height:61.0px;background:#9cc2e5;border-color:#9aa5c4;"><span style="padding-left:14px"><svg class="pm " viewBox="0 0 10 10"><path d="M6.9 .9h1.8v5.7H1.1M3.9 3.8 1.1 6.6 3.9 9.4"/></svg></span></div>
<div class="cell " style="left:112.0px;top:375.0px;width:65.0px;height:53.0px;background:#fff;border-color:#9aa5c4;line-height:24.6px;"><span><span class="sf">2</span><span class="hg"><svg class="pm " viewBox="0 0 10 10"><path d="M6.9 .9h1.8v5.7H1.1M3.9 3.8 1.1 6.6 3.9 9.4"/></svg></span></span></div>
<div class="cell " style="left:176.0px;top:375.0px;width:126.0px;height:53.0px;background:#fff;border-color:#9aa5c4;line-height:24.6px;"><span><span class="cj" style="min-width:4em">无损检测</span><span class="hg"><svg class="pm " viewBox="0 0 10 10"><path d="M6.9 .9h1.8v5.7H1.1M3.9 3.8 1.1 6.6 3.9 9.4"/></svg></span></span></div>
<div class="cell " style="left:301.0px;top:375.0px;width:83.0px;height:53.0px;background:#fff;border-color:#9aa5c4;line-height:24.6px;"><span><span class="cj" style="min-width:3em">李俊超</span><span class="hg"><svg class="pm " viewBox="0 0 10 10"><path d="M6.9 .9h1.8v5.7H1.1M3.9 3.8 1.1 6.6 3.9 9.4"/></svg></span></span></div>
<div class="cell " style="left:383.0px;top:375.0px;width:57.0px;height:53.0px;background:#fff;border-color:#9aa5c4;line-height:24.6px;"><span><span class="sf">33</span><span class="cj1">岁</span><span class="hg"><svg class="pm " viewBox="0 0 10 10"><path d="M6.9 .9h1.8v5.7H1.1M3.9 3.8 1.1 6.6 3.9 9.4"/></svg></span></span></div>
<div class="cell " style="left:439.0px;top:375.0px;width:352.0px;height:53.0px;background:#fff;border-color:#9aa5c4;line-height:24.6px;"><span><span class="cj" style="min-width:19em">无损检测（射线胶片照相检测、脉冲反射法</span><br><span class="cj" style="min-width:15em">超声检测、磁粉检测、渗透检测）</span><span class="hg"><svg class="pm " viewBox="0 0 10 10"><path d="M6.9 .9h1.8v5.7H1.1M3.9 3.8 1.1 6.6 3.9 9.4"/></svg></span></span></div>
<div class="cell " style="left:790.0px;top:375.0px;width:55.0px;height:53.0px;background:#fff;border-color:#9aa5c4;"><span style="padding-left:14px"><svg class="pm " viewBox="0 0 10 10"><path d="M6.9 .9h1.8v5.7H1.1M3.9 3.8 1.1 6.6 3.9 9.4"/></svg></span></div>
<div class="cell " style="left:112.0px;top:427.0px;width:65.0px;height:48.0px;background:#9cc2e5;border-color:#9aa5c4;line-height:24.6px;"><span><span class="sf">3</span><span class="hg"><svg class="pm " viewBox="0 0 10 10"><path d="M6.9 .9h1.8v5.7H1.1M3.9 3.8 1.1 6.6 3.9 9.4"/></svg></span></span></div>
<div class="cell " style="left:176.0px;top:427.0px;width:126.0px;height:48.0px;background:#9cc2e5;border-color:#9aa5c4;line-height:24.6px;"><span><span class="cj" style="min-width:4em">无损检测</span><span class="hg"><svg class="pm " viewBox="0 0 10 10"><path d="M6.9 .9h1.8v5.7H1.1M3.9 3.8 1.1 6.6 3.9 9.4"/></svg></span></span></div>
<div class="cell " style="left:301.0px;top:427.0px;width:83.0px;height:48.0px;background:#9cc2e5;border-color:#9aa5c4;line-height:24.6px;"><span><span class="cj" style="min-width:2em">王波</span><span class="hg"><svg class="pm " viewBox="0 0 10 10"><path d="M6.9 .9h1.8v5.7H1.1M3.9 3.8 1.1 6.6 3.9 9.4"/></svg></span></span></div>
<div class="cell " style="left:383.0px;top:427.0px;width:57.0px;height:48.0px;background:#9cc2e5;border-color:#9aa5c4;line-height:24.6px;"><span><span class="sf">35</span><span class="cj1">岁</span><span class="hg"><svg class="pm " viewBox="0 0 10 10"><path d="M6.9 .9h1.8v5.7H1.1M3.9 3.8 1.1 6.6 3.9 9.4"/></svg></span></span></div>
<div class="cell " style="left:439.0px;top:427.0px;width:352.0px;height:48.0px;background:#9cc2e5;border-color:#9aa5c4;line-height:24.6px;"><span><span class="cj" style="min-width:15em">无损检测（脉冲反射法超声检测）</span><span class="hg"><svg class="pm " viewBox="0 0 10 10"><path d="M6.9 .9h1.8v5.7H1.1M3.9 3.8 1.1 6.6 3.9 9.4"/></svg></span></span></div>
<div class="cell " style="left:790.0px;top:427.0px;width:55.0px;height:48.0px;background:#9cc2e5;border-color:#9aa5c4;"><span style="padding-left:14px"><svg class="pm " viewBox="0 0 10 10"><path d="M6.9 .9h1.8v5.7H1.1M3.9 3.8 1.1 6.6 3.9 9.4"/></svg></span></div>
<div class="cell " style="left:112.0px;top:474.0px;width:65.0px;height:48.0px;background:#fff;border-color:#9aa5c4;line-height:24.6px;"><span><span class="sf">4</span><span class="hg"><svg class="pm " viewBox="0 0 10 10"><path d="M6.9 .9h1.8v5.7H1.1M3.9 3.8 1.1 6.6 3.9 9.4"/></svg></span></span></div>
<div class="cell " style="left:176.0px;top:474.0px;width:126.0px;height:48.0px;background:#fff;border-color:#9aa5c4;line-height:24.6px;"><span><span class="cj" style="min-width:4em">无损检测</span><span class="hg"><svg class="pm " viewBox="0 0 10 10"><path d="M6.9 .9h1.8v5.7H1.1M3.9 3.8 1.1 6.6 3.9 9.4"/></svg></span></span></div>
<div class="cell " style="left:301.0px;top:474.0px;width:83.0px;height:48.0px;background:#fff;border-color:#9aa5c4;line-height:24.6px;"><span><span class="cj" style="min-width:2em">彭飞</span><span class="hg"><svg class="pm " viewBox="0 0 10 10"><path d="M6.9 .9h1.8v5.7H1.1M3.9 3.8 1.1 6.6 3.9 9.4"/></svg></span></span></div>
<div class="cell " style="left:383.0px;top:474.0px;width:57.0px;height:48.0px;background:#fff;border-color:#9aa5c4;line-height:24.6px;"><span><span class="sf">41</span><span class="cj1">岁</span><span class="hg"><svg class="pm " viewBox="0 0 10 10"><path d="M6.9 .9h1.8v5.7H1.1M3.9 3.8 1.1 6.6 3.9 9.4"/></svg></span></span></div>
<div class="cell " style="left:439.0px;top:474.0px;width:352.0px;height:48.0px;background:#fff;border-color:#9aa5c4;line-height:24.6px;"><span><span class="cj" style="min-width:15em">无损检测（磁粉检测、渗透检测）</span><span class="hg"><svg class="pm " viewBox="0 0 10 10"><path d="M6.9 .9h1.8v5.7H1.1M3.9 3.8 1.1 6.6 3.9 9.4"/></svg></span></span></div>
<div class="cell " style="left:790.0px;top:474.0px;width:55.0px;height:48.0px;background:#fff;border-color:#9aa5c4;"><span style="padding-left:14px"><svg class="pm " viewBox="0 0 10 10"><path d="M6.9 .9h1.8v5.7H1.1M3.9 3.8 1.1 6.6 3.9 9.4"/></svg></span></div>
<div class="cell " style="left:112.0px;top:521.0px;width:65.0px;height:48.0px;background:#9cc2e5;border-color:#9aa5c4;line-height:24.6px;"><span><span class="sf">5</span><span class="hg"><svg class="pm " viewBox="0 0 10 10"><path d="M6.9 .9h1.8v5.7H1.1M3.9 3.8 1.1 6.6 3.9 9.4"/></svg></span></span></div>
<div class="cell " style="left:176.0px;top:521.0px;width:126.0px;height:48.0px;background:#9cc2e5;border-color:#9aa5c4;line-height:24.6px;"><span><span class="cj" style="min-width:4em">无损检测</span><span class="hg"><svg class="pm " viewBox="0 0 10 10"><path d="M6.9 .9h1.8v5.7H1.1M3.9 3.8 1.1 6.6 3.9 9.4"/></svg></span></span></div>
<div class="cell " style="left:301.0px;top:521.0px;width:83.0px;height:48.0px;background:#9cc2e5;border-color:#9aa5c4;line-height:24.6px;"><span><span class="cj" style="min-width:3em">綦振宁</span><span class="hg"><svg class="pm " viewBox="0 0 10 10"><path d="M6.9 .9h1.8v5.7H1.1M3.9 3.8 1.1 6.6 3.9 9.4"/></svg></span></span></div>
<div class="cell " style="left:383.0px;top:521.0px;width:57.0px;height:48.0px;background:#9cc2e5;border-color:#9aa5c4;line-height:24.6px;"><span><span class="sf">43</span><span class="cj1">岁</span><span class="hg"><svg class="pm " viewBox="0 0 10 10"><path d="M6.9 .9h1.8v5.7H1.1M3.9 3.8 1.1 6.6 3.9 9.4"/></svg></span></span></div>
<div class="cell " style="left:439.0px;top:521.0px;width:352.0px;height:48.0px;background:#9cc2e5;border-color:#9aa5c4;line-height:24.6px;"><span><span class="cj" style="min-width:14em">无损检测（射线胶片照相检测）</span><span class="hg"><svg class="pm " viewBox="0 0 10 10"><path d="M6.9 .9h1.8v5.7H1.1M3.9 3.8 1.1 6.6 3.9 9.4"/></svg></span></span></div>
<div class="cell " style="left:790.0px;top:521.0px;width:55.0px;height:48.0px;background:#9cc2e5;border-color:#9aa5c4;"><span style="padding-left:14px"><svg class="pm " viewBox="0 0 10 10"><path d="M6.9 .9h1.8v5.7H1.1M3.9 3.8 1.1 6.6 3.9 9.4"/></svg></span></div>
<div class="cell " style="left:112.0px;top:568.0px;width:65.0px;height:48.0px;background:#fff;border-color:#9aa5c4;line-height:24.6px;"><span><span class="sf">6</span><span class="hg"><svg class="pm " viewBox="0 0 10 10"><path d="M6.9 .9h1.8v5.7H1.1M3.9 3.8 1.1 6.6 3.9 9.4"/></svg></span></span></div>
<div class="cell " style="left:176.0px;top:568.0px;width:126.0px;height:48.0px;background:#fff;border-color:#9aa5c4;line-height:24.6px;"><span><span class="cj" style="min-width:3em">质检员</span><span class="hg"><svg class="pm " viewBox="0 0 10 10"><path d="M6.9 .9h1.8v5.7H1.1M3.9 3.8 1.1 6.6 3.9 9.4"/></svg></span></span></div>
<div class="cell " style="left:301.0px;top:568.0px;width:83.0px;height:48.0px;background:#fff;border-color:#9aa5c4;line-height:24.6px;"><span><span class="du"><span class="cj" style="min-width:3em">高尚将</span></span><span class="hg"><svg class="pm " viewBox="0 0 10 10"><path d="M6.9 .9h1.8v5.7H1.1M3.9 3.8 1.1 6.6 3.9 9.4"/></svg></span></span></div>
<div class="cell " style="left:383.0px;top:568.0px;width:57.0px;height:48.0px;background:#fff;border-color:#9aa5c4;line-height:24.6px;"><span><span class="sf">35</span><span class="cj1">岁</span><span class="hg"><svg class="pm " viewBox="0 0 10 10"><path d="M6.9 .9h1.8v5.7H1.1M3.9 3.8 1.1 6.6 3.9 9.4"/></svg></span></span></div>
<div class="cell " style="left:439.0px;top:568.0px;width:352.0px;height:48.0px;background:#fff;border-color:#9aa5c4;line-height:24.6px;"><span><span class="cj" style="min-width:6em">高级光谱分析</span><span class="hg"><svg class="pm " viewBox="0 0 10 10"><path d="M6.9 .9h1.8v5.7H1.1M3.9 3.8 1.1 6.6 3.9 9.4"/></svg></span></span></div>
<div class="cell " style="left:790.0px;top:568.0px;width:55.0px;height:48.0px;background:#fff;border-color:#9aa5c4;"><span style="padding-left:14px"><svg class="pm " viewBox="0 0 10 10"><path d="M6.9 .9h1.8v5.7H1.1M3.9 3.8 1.1 6.6 3.9 9.4"/></svg></span></div>
<div class="cell " style="left:112.0px;top:615.0px;width:65.0px;height:47.0px;background:#9cc2e5;border-color:#9aa5c4;line-height:24.6px;"><span><span class="sf">7</span><span class="hg"><svg class="pm " viewBox="0 0 10 10"><path d="M6.9 .9h1.8v5.7H1.1M3.9 3.8 1.1 6.6 3.9 9.4"/></svg></span></span></div>
<div class="cell " style="left:176.0px;top:615.0px;width:126.0px;height:47.0px;background:#9cc2e5;border-color:#9aa5c4;line-height:24.6px;"><span><span class="cj" style="min-width:3em">质检员</span><span class="hg"><svg class="pm " viewBox="0 0 10 10"><path d="M6.9 .9h1.8v5.7H1.1M3.9 3.8 1.1 6.6 3.9 9.4"/></svg></span></span></div>
<div class="cell " style="left:301.0px;top:615.0px;width:83.0px;height:47.0px;background:#9cc2e5;border-color:#9aa5c4;line-height:24.6px;"><span><span class="cj" style="min-width:3em">张春雷</span><span class="hg"><svg class="pm " viewBox="0 0 10 10"><path d="M6.9 .9h1.8v5.7H1.1M3.9 3.8 1.1 6.6 3.9 9.4"/></svg></span></span></div>
<div class="cell " style="left:383.0px;top:615.0px;width:57.0px;height:47.0px;background:#9cc2e5;border-color:#9aa5c4;line-height:24.6px;"><span><span class="sf">48</span><span class="cj1">岁</span><span class="hg"><svg class="pm " viewBox="0 0 10 10"><path d="M6.9 .9h1.8v5.7H1.1M3.9 3.8 1.1 6.6 3.9 9.4"/></svg></span></span></div>
<div class="cell " style="left:439.0px;top:615.0px;width:352.0px;height:47.0px;background:#9cc2e5;border-color:#9aa5c4;line-height:24.6px;"><span><span class="cj" style="min-width:13em">四级力学性能、四级化学分析</span><span class="hg"><svg class="pm " viewBox="0 0 10 10"><path d="M6.9 .9h1.8v5.7H1.1M3.9 3.8 1.1 6.6 3.9 9.4"/></svg></span></span></div>
<div class="cell " style="left:790.0px;top:615.0px;width:55.0px;height:47.0px;background:#9cc2e5;border-color:#9aa5c4;"><span style="padding-left:14px"><svg class="pm " viewBox="0 0 10 10"><path d="M6.9 .9h1.8v5.7H1.1M3.9 3.8 1.1 6.6 3.9 9.4"/></svg></span></div>
<div class="cell " style="left:112.0px;top:661.0px;width:65.0px;height:48.0px;background:#fff;border-color:#9aa5c4;line-height:24.6px;"><span><span class="sf">8</span><span class="hg"><svg class="pm " viewBox="0 0 10 10"><path d="M6.9 .9h1.8v5.7H1.1M3.9 3.8 1.1 6.6 3.9 9.4"/></svg></span></span></div>
<div class="cell " style="left:176.0px;top:661.0px;width:126.0px;height:48.0px;background:#fff;border-color:#9aa5c4;line-height:24.6px;"><span><span class="cj" style="min-width:3em">质检员</span><span class="hg"><svg class="pm " viewBox="0 0 10 10"><path d="M6.9 .9h1.8v5.7H1.1M3.9 3.8 1.1 6.6 3.9 9.4"/></svg></span></span></div>
<div class="cell " style="left:301.0px;top:661.0px;width:83.0px;height:48.0px;background:#fff;border-color:#9aa5c4;line-height:24.6px;"><span><span class="du"><span class="cj" style="min-width:3em">丁柏予</span></span><span class="hg"><svg class="pm " viewBox="0 0 10 10"><path d="M6.9 .9h1.8v5.7H1.1M3.9 3.8 1.1 6.6 3.9 9.4"/></svg></span></span></div>
<div class="cell " style="left:383.0px;top:661.0px;width:57.0px;height:48.0px;background:#fff;border-color:#9aa5c4;line-height:24.6px;"><span><span class="sf">31</span><span class="cj1">岁</span><span class="hg"><svg class="pm " viewBox="0 0 10 10"><path d="M6.9 .9h1.8v5.7H1.1M3.9 3.8 1.1 6.6 3.9 9.4"/></svg></span></span></div>
<div class="cell " style="left:439.0px;top:661.0px;width:352.0px;height:48.0px;background:#fff;border-color:#9aa5c4;line-height:24.6px;"><span><span class="cj" style="min-width:6em">高级金相检验</span><span class="hg"><svg class="pm " viewBox="0 0 10 10"><path d="M6.9 .9h1.8v5.7H1.1M3.9 3.8 1.1 6.6 3.9 9.4"/></svg></span></span></div>
<div class="cell " style="left:790.0px;top:661.0px;width:55.0px;height:48.0px;background:#fff;border-color:#9aa5c4;"><span style="padding-left:14px"><svg class="pm " viewBox="0 0 10 10"><path d="M6.9 .9h1.8v5.7H1.1M3.9 3.8 1.1 6.6 3.9 9.4"/></svg></span></div>
<div class="cell " style="left:112.0px;top:708.0px;width:65.0px;height:48.0px;background:#9cc2e5;border-color:#9aa5c4;line-height:24.6px;"><span><span class="sf">9</span><span class="hg"><svg class="pm " viewBox="0 0 10 10"><path d="M6.9 .9h1.8v5.7H1.1M3.9 3.8 1.1 6.6 3.9 9.4"/></svg></span></span></div>
<div class="cell " style="left:176.0px;top:708.0px;width:126.0px;height:48.0px;background:#9cc2e5;border-color:#9aa5c4;line-height:24.6px;"><span><span class="cj" style="min-width:3em">质检员</span><span class="hg"><svg class="pm " viewBox="0 0 10 10"><path d="M6.9 .9h1.8v5.7H1.1M3.9 3.8 1.1 6.6 3.9 9.4"/></svg></span></span></div>
<div class="cell " style="left:301.0px;top:708.0px;width:83.0px;height:48.0px;background:#9cc2e5;border-color:#9aa5c4;line-height:24.6px;"><span><span class="cj" style="min-width:3em">丁新中</span><span class="hg"><svg class="pm " viewBox="0 0 10 10"><path d="M6.9 .9h1.8v5.7H1.1M3.9 3.8 1.1 6.6 3.9 9.4"/></svg></span></span></div>
<div class="cell " style="left:383.0px;top:708.0px;width:57.0px;height:48.0px;background:#9cc2e5;border-color:#9aa5c4;line-height:24.6px;"><span><span class="sf">55</span><span class="cj1">岁</span><span class="hg"><svg class="pm " viewBox="0 0 10 10"><path d="M6.9 .9h1.8v5.7H1.1M3.9 3.8 1.1 6.6 3.9 9.4"/></svg></span></span></div>
<div class="cell " style="left:439.0px;top:708.0px;width:352.0px;height:48.0px;background:#9cc2e5;border-color:#9aa5c4;line-height:24.6px;"><span><span class="cj" style="min-width:3em">热处理</span><span class="ln">II</span><span class="cj1">级</span><span class="hg"><svg class="pm " viewBox="0 0 10 10"><path d="M6.9 .9h1.8v5.7H1.1M3.9 3.8 1.1 6.6 3.9 9.4"/></svg></span></span></div>
<div class="cell " style="left:790.0px;top:708.0px;width:55.0px;height:48.0px;background:#9cc2e5;border-color:#9aa5c4;"><span style="padding-left:14px"><svg class="pm " viewBox="0 0 10 10"><path d="M6.9 .9h1.8v5.7H1.1M3.9 3.8 1.1 6.6 3.9 9.4"/></svg></span></div>
<div class="cell " style="left:112.0px;top:755.0px;width:65.0px;height:48.0px;background:#fff;border-color:#9aa5c4;line-height:24.6px;"><span><span class="sf">10</span><span class="hg"><svg class="pm " viewBox="0 0 10 10"><path d="M6.9 .9h1.8v5.7H1.1M3.9 3.8 1.1 6.6 3.9 9.4"/></svg></span></span></div>
<div class="cell " style="left:176.0px;top:755.0px;width:126.0px;height:48.0px;background:#fff;border-color:#9aa5c4;line-height:24.6px;"><span><span class="cj" style="min-width:3em">质检员</span><span class="hg"><svg class="pm " viewBox="0 0 10 10"><path d="M6.9 .9h1.8v5.7H1.1M3.9 3.8 1.1 6.6 3.9 9.4"/></svg></span></span></div>
<div class="cell " style="left:301.0px;top:755.0px;width:83.0px;height:48.0px;background:#fff;border-color:#9aa5c4;line-height:24.6px;"><span><span class="cj" style="min-width:2em">徐晨</span><span class="hg"><svg class="pm " viewBox="0 0 10 10"><path d="M6.9 .9h1.8v5.7H1.1M3.9 3.8 1.1 6.6 3.9 9.4"/></svg></span></span></div>
<div class="cell " style="left:383.0px;top:755.0px;width:57.0px;height:48.0px;background:#fff;border-color:#9aa5c4;line-height:24.6px;"><span><span class="sf">30</span><span class="cj1">岁</span><span class="hg"><svg class="pm " viewBox="0 0 10 10"><path d="M6.9 .9h1.8v5.7H1.1M3.9 3.8 1.1 6.6 3.9 9.4"/></svg></span></span></div>
<div class="cell " style="left:439.0px;top:755.0px;width:352.0px;height:48.0px;background:#fff;border-color:#9aa5c4;line-height:24.6px;"><span><span class="cj" style="min-width:6em">化学成分分析</span><span class="ln">II</span><span class="cj1">级</span><span class="hg"><svg class="pm " viewBox="0 0 10 10"><path d="M6.9 .9h1.8v5.7H1.1M3.9 3.8 1.1 6.6 3.9 9.4"/></svg></span></span></div>
<div class="cell " style="left:790.0px;top:755.0px;width:55.0px;height:48.0px;background:#fff;border-color:#9aa5c4;"><span style="padding-left:14px"><svg class="pm " viewBox="0 0 10 10"><path d="M6.9 .9h1.8v5.7H1.1M3.9 3.8 1.1 6.6 3.9 9.4"/></svg></span></div>
<div class="c" style="left:851.5px;top:232.0px;font-size:17px"><svg class="pm " viewBox="0 0 10 10"><path d="M6.9 .9h1.8v5.7H1.1M3.9 3.8 1.1 6.6 3.9 9.4"/></svg></div>
<div class="c" style="left:851.5px;top:266.5px;font-size:17px"><svg class="pm " viewBox="0 0 10 10"><path d="M6.9 .9h1.8v5.7H1.1M3.9 3.8 1.1 6.6 3.9 9.4"/></svg></div>
<div class="c" style="left:851.5px;top:301.0px;font-size:17px"><svg class="pm " viewBox="0 0 10 10"><path d="M6.9 .9h1.8v5.7H1.1M3.9 3.8 1.1 6.6 3.9 9.4"/></svg></div>
<div class="c" style="left:851.5px;top:327.0px;font-size:17px"><svg class="pm " viewBox="0 0 10 10"><path d="M6.9 .9h1.8v5.7H1.1M3.9 3.8 1.1 6.6 3.9 9.4"/></svg></div>
<div class="c" style="left:851.5px;top:387.0px;font-size:17px"><svg class="pm " viewBox="0 0 10 10"><path d="M6.9 .9h1.8v5.7H1.1M3.9 3.8 1.1 6.6 3.9 9.4"/></svg></div>
<div class="c" style="left:851.5px;top:439.0px;font-size:17px"><svg class="pm " viewBox="0 0 10 10"><path d="M6.9 .9h1.8v5.7H1.1M3.9 3.8 1.1 6.6 3.9 9.4"/></svg></div>
<div class="c" style="left:851.5px;top:486.0px;font-size:17px"><svg class="pm " viewBox="0 0 10 10"><path d="M6.9 .9h1.8v5.7H1.1M3.9 3.8 1.1 6.6 3.9 9.4"/></svg></div>
<div class="c" style="left:851.5px;top:533.0px;font-size:17px"><svg class="pm " viewBox="0 0 10 10"><path d="M6.9 .9h1.8v5.7H1.1M3.9 3.8 1.1 6.6 3.9 9.4"/></svg></div>
<div class="c" style="left:851.5px;top:580.0px;font-size:17px"><svg class="pm " viewBox="0 0 10 10"><path d="M6.9 .9h1.8v5.7H1.1M3.9 3.8 1.1 6.6 3.9 9.4"/></svg></div>
<div class="c" style="left:851.5px;top:626.5px;font-size:17px"><svg class="pm " viewBox="0 0 10 10"><path d="M6.9 .9h1.8v5.7H1.1M3.9 3.8 1.1 6.6 3.9 9.4"/></svg></div>
<div class="c" style="left:851.5px;top:673.0px;font-size:17px"><svg class="pm " viewBox="0 0 10 10"><path d="M6.9 .9h1.8v5.7H1.1M3.9 3.8 1.1 6.6 3.9 9.4"/></svg></div>
<div class="c" style="left:851.5px;top:720.0px;font-size:17px"><svg class="pm " viewBox="0 0 10 10"><path d="M6.9 .9h1.8v5.7H1.1M3.9 3.8 1.1 6.6 3.9 9.4"/></svg></div>
<div class="c" style="left:851.5px;top:767.0px;font-size:17px"><svg class="pm " viewBox="0 0 10 10"><path d="M6.9 .9h1.8v5.7H1.1M3.9 3.8 1.1 6.6 3.9 9.4"/></svg></div>
<div class="l doc" style="left:147.5px;top:815.6px;font-size:16.75px;color:#000;letter-spacing:.02px"><span class="cj" style="min-width:26em">注：投标人应将相关证明材料附在本表后，要求详见第一章</span><span class="fq" style="text-align:right">“</span><span class="cj" style="min-width:4em">招标公告</span><span class="fq" style="text-align:left">”</span><span class="cj" style="min-width:9em">中要求的相关证书、</span></div>
</div>
<div class="page" style="left:1626px;top:188px;width:874px;height:821px;border-right:none">
<svg style="left:23.0px;top:27.0px" width="100" height="75" viewBox="0 0 1373 1030"><g fill="#9a9ad0" stroke="#9a9ad0" stroke-width="11" stroke-linejoin="round"><path d="M338 262C400 262 480 240 548 228L556 252C490 266 420 286 352 296C332 292 328 272 338 262Z"/><path d="M243 432C330 408 480 362 604 338L618 372C520 388 380 440 275 472C248 476 236 452 243 432Z"/><path d="M384 204L420 210C418 320 404 440 388 522L356 516C378 420 388 310 384 204Z"/><path d="M468 150C486 138 508 138 522 158C522 300 518 480 502 602L484 596C480 450 476 300 468 150Z"/><path d="M858 184C890 176 918 192 930 216C902 228 878 216 862 204Z"/><path d="M918 206C872 226 800 256 758 300C752 322 768 334 790 322C822 292 876 264 928 240Z"/><path d="M848 282L892 270C890 350 888 430 882 508L854 502C858 420 856 350 848 282Z"/><path d="M846 300C838 360 820 410 792 446L812 458C842 420 864 370 874 318Z"/><path d="M890 330L932 372L914 388L884 350Z"/><path d="M938 260C1000 244 1070 234 1132 238C1148 290 1142 350 1122 402L1094 396C1108 350 1112 306 1104 266C1050 266 1000 276 966 284C970 320 970 370 962 412L934 406C946 360 946 310 938 260Z"/><path d="M960 318C1010 308 1060 303 1110 303L1110 330C1060 332 1010 337 962 347Z"/><path d="M958 383C1010 373 1060 370 1116 370L1112 400C1060 400 1010 404 958 414Z"/><path d="M998 146C1014 138 1036 138 1048 150C1048 300 1042 450 1026 592L1010 588C1008 450 1004 300 998 146Z"/></g><circle cx="1213" cy="133" r="58" fill="none" stroke="#b4b4dc" stroke-width="11"/><path d="M1192 165V100H1218C1240 100 1240 132 1218 132H1192M1218 132L1238 165" fill="none" stroke="#b4b4dc" stroke-width="9"/><g fill="none" stroke="#a0a0d6" stroke-width="16" stroke-linecap="round" stroke-linejoin="round"><path d="M250 738C222 800 182 880 132 936C112 956 90 946 100 920C116 888 162 858 204 830"/><path d="M318 738C302 772 286 802 281 826C281 842 296 836 312 820"/><path d="M352 738C342 772 326 806 316 832M336 788C362 752 402 726 422 742C436 756 412 800 406 826C406 842 426 836 442 820"/><path d="M562 742C522 722 470 772 482 812C492 842 542 812 566 752M578 736C552 800 522 880 492 932C472 956 450 946 460 920C480 886 540 852 604 826"/><path d="M742 732C702 736 680 760 700 780C726 800 722 832 682 836C662 836 650 826 655 816"/><path d="M932 636C892 700 832 790 800 832M830 792C860 752 900 726 916 744C930 760 902 800 898 826C898 840 916 836 936 818"/><path d="M976 802C1010 796 1052 770 1046 746C1040 726 1000 736 980 776C966 810 980 842 1010 836C1032 832 1050 820 1066 806"/><path d="M1106 738C1096 772 1080 806 1072 832M1090 788C1116 752 1156 726 1174 742C1188 756 1166 800 1160 826C1160 842 1180 836 1200 816"/></g><circle cx="258" cy="700" r="9" fill="#a4a4d8"/><circle cx="336" cy="700" r="9" fill="#a4a4d8"/></svg><div class="c doc fb" style="left:474.5px;top:64.7px;font-size:16.7px;color:#7f7f7f"><span class="cj" style="min-width:13em">淮安市井神钻采机具有限公司</span><span class="hg"><svg class="pm " viewBox="0 0 10 10"><path d="M6.9 .9h1.8v5.7H1.1M3.9 3.8 1.1 6.6 3.9 9.4"/></svg></span></div><div class="c doc fb" style="left:474.2px;top:86.8px;font-size:16.55px;color:#7f7f7f"><span class="cj" style="min-width:26em">长庆井下技术作业公司油井区域大通径平板阀维修服务项目</span>-<span class="cj" style="min-width:4em">投标文件</span><span class="hg"><svg class="pm " viewBox="0 0 10 10"><path d="M6.9 .9h1.8v5.7H1.1M3.9 3.8 1.1 6.6 3.9 9.4"/></svg></span></div><svg style="left:0;top:0" width="960" height="120" viewBox="0 0 960 120"><path d="M111.9 70.0V97.4M837.5 70.0V97.4M84.0 97.4H865.0" stroke="#8c8c8c" stroke-width="1" fill="none"/><path d="M487.0 94.6q1.5-2.4 3 0t3 0 3 0 3 0 3 0 3 0" stroke="#e02020" stroke-width="1" fill="none"/></svg>
<svg style="left:80.5px;top:97.6px" width="14" height="18" viewBox="0 0 14 18"><g fill="none" stroke="#2b8ad6" stroke-width="1.2"><circle cx="7" cy="2.6" r="1.7"/><path d="M7 4.3v11.4M4.4 7.4h5.2M1.6 10.4c.3 3 2.4 5 5.4 5.3 3-.3 5.1-2.3 5.4-5.3M1 12.2l.6-2 1.8 1.1M13 12.2l-.6-2-1.8 1.1"/></g></svg>
<div class="abs" style="left:101.8px;top:120.0px;width:5px;height:5px;background:#000"></div>
<div class="l doc fb" style="left:112.8px;top:114.4px;font-size:24px;color:#000"><span style="letter-spacing:1.9px"><span class="sf">6.2</span> </span><span class="cj" style="min-width:5em">拟投入设备</span>/<span class="cj" style="min-width:2em">仪器</span><svg class="pm g" viewBox="0 0 10 10"><path d="M6.9 .9h1.8v5.7H1.1M3.9 3.8 1.1 6.6 3.9 9.4"/></svg></div>
<div class="c doc fb" style="left:474.8px;top:158.0px;font-size:16.6px;color:#2f5496"><span class="cj" style="min-width:8em">详见服务方案部分</span><span class="sf">116</span><span class="cj1">页</span>-<span class="sf">142</span><span class="cj" style="min-width:2em">页，</span><span class="sf">181</span><span class="cj1">页</span>-<span class="sf">202</span><span class="cj1">页</span><span class="hg"><svg class="pm " viewBox="0 0 10 10"><path d="M6.9 .9h1.8v5.7H1.1M3.9 3.8 1.1 6.6 3.9 9.4"/></svg></span></div>
<div class="cell r2 fb" style="left:108.0px;top:170.0px;width:69.0px;height:47.0px;background:#2f5496;border-color:#8eaadb;color:#fff;font-size:16.8px;"><span><span class="cj" style="min-width:2em">序号</span><span class="hg"><svg class="pm " viewBox="0 0 10 10"><path d="M6.9 .9h1.8v5.7H1.1M3.9 3.8 1.1 6.6 3.9 9.4"/></svg></span></span></div>
<div class="cell r2 fb" style="left:176.0px;top:170.0px;width:188.0px;height:47.0px;background:#2f5496;border-color:#8eaadb;color:#fff;font-size:16.8px;"><span><span class="cj" style="min-width:2em">名称</span>/<span class="cj" style="min-width:4em">车辆品牌</span><span class="hg"><svg class="pm " viewBox="0 0 10 10"><path d="M6.9 .9h1.8v5.7H1.1M3.9 3.8 1.1 6.6 3.9 9.4"/></svg></span></span></div>
<div class="cell r2 fb" style="left:363.0px;top:170.0px;width:117.0px;height:47.0px;background:#2f5496;border-color:#8eaadb;color:#fff;font-size:16.8px;"><span><span class="cj" style="min-width:4em">规格型号</span><span class="hg"><svg class="pm " viewBox="0 0 10 10"><path d="M6.9 .9h1.8v5.7H1.1M3.9 3.8 1.1 6.6 3.9 9.4"/></svg></span></span></div>
<div class="cell r2 fb" style="left:479.0px;top:170.0px;width:144.0px;height:47.0px;background:#2f5496;border-color:#8eaadb;color:#fff;font-size:16.8px;"><span><span class="cj" style="min-width:2em">数量</span><span class="hg"><svg class="pm " viewBox="0 0 10 10"><path d="M6.9 .9h1.8v5.7H1.1M3.9 3.8 1.1 6.6 3.9 9.4"/></svg></span></span></div>
<div class="cell r2 fb" style="left:622.0px;top:170.0px;width:118.0px;height:47.0px;background:#2f5496;border-color:#8eaadb;color:#fff;font-size:16.8px;"><span><span class="cj" style="min-width:4em">使用年限</span><span class="hg"><svg class="pm " viewBox="0 0 10 10"><path d="M6.9 .9h1.8v5.7H1.1M3.9 3.8 1.1 6.6 3.9 9.4"/></svg></span></span></div>
<div class="cell r2 fb" style="left:739.0px;top:170.0px;width:101.0px;height:47.0px;background:#2f5496;border-color:#8eaadb;color:#fff;font-size:16.8px;"><span><span class="cj" style="min-width:2em">备注</span><span class="hg"><svg class="pm " viewBox="0 0 10 10"><path d="M6.9 .9h1.8v5.7H1.1M3.9 3.8 1.1 6.6 3.9 9.4"/></svg></span></span></div>
<div class="cell r2" style="left:108.0px;top:216.0px;width:69.0px;height:93.0px;background:#9cc2e5;border-color:#8eaadb;"><span><span class="sf">1</span><span class="hg"><svg class="pm " viewBox="0 0 10 10"><path d="M6.9 .9h1.8v5.7H1.1M3.9 3.8 1.1 6.6 3.9 9.4"/></svg></span></span></div>
<div class="cell r2" style="left:108.0px;top:308.0px;width:69.0px;height:47.0px;background:#9cc2e5;border-color:#8eaadb;"><span><span class="sf">2</span><span class="hg"><svg class="pm " viewBox="0 0 10 10"><path d="M6.9 .9h1.8v5.7H1.1M3.9 3.8 1.1 6.6 3.9 9.4"/></svg></span></span></div>
<div class="cell r2" style="left:108.0px;top:354.0px;width:69.0px;height:93.0px;background:#fff;border-color:#8eaadb;"><span><span class="sf">3</span><span class="hg"><svg class="pm " viewBox="0 0 10 10"><path d="M6.9 .9h1.8v5.7H1.1M3.9 3.8 1.1 6.6 3.9 9.4"/></svg></span></span></div>
<div class="cell r2" style="left:108.0px;top:446.0px;width:69.0px;height:48.0px;background:#fff;border-color:#8eaadb;"><span><span class="sf">4</span><span class="hg"><svg class="pm " viewBox="0 0 10 10"><path d="M6.9 .9h1.8v5.7H1.1M3.9 3.8 1.1 6.6 3.9 9.4"/></svg></span></span></div>
<div class="cell r2" style="left:108.0px;top:493.0px;width:69.0px;height:47.0px;background:#9cc2e5;border-color:#8eaadb;"><span><span class="sf">5</span><span class="hg"><svg class="pm " viewBox="0 0 10 10"><path d="M6.9 .9h1.8v5.7H1.1M3.9 3.8 1.1 6.6 3.9 9.4"/></svg></span></span></div>
<div class="cell r2" style="left:108.0px;top:539.0px;width:69.0px;height:47.0px;background:#fff;border-color:#8eaadb;"><span><span class="sf">6</span><span class="hg"><svg class="pm " viewBox="0 0 10 10"><path d="M6.9 .9h1.8v5.7H1.1M3.9 3.8 1.1 6.6 3.9 9.4"/></svg></span></span></div>
<div class="cell r2" style="left:108.0px;top:585.0px;width:69.0px;height:93.0px;background:#9cc2e5;border-color:#8eaadb;"><span><span class="sf">1</span><span class="hg"><svg class="pm " viewBox="0 0 10 10"><path d="M6.9 .9h1.8v5.7H1.1M3.9 3.8 1.1 6.6 3.9 9.4"/></svg></span></span></div>
<div class="cell r2" style="left:108.0px;top:677.0px;width:69.0px;height:47.0px;background:#9cc2e5;border-color:#8eaadb;"><span><span class="sf">2</span><span class="hg"><svg class="pm " viewBox="0 0 10 10"><path d="M6.9 .9h1.8v5.7H1.1M3.9 3.8 1.1 6.6 3.9 9.4"/></svg></span></span></div>
<div class="cell r2" style="left:108.0px;top:723.0px;width:69.0px;height:93.0px;background:#fff;border-color:#8eaadb;"><span><b><span class="sf">3</span></b><span class="hg"><svg class="pm " viewBox="0 0 10 10"><path d="M6.9 .9h1.8v5.7H1.1M3.9 3.8 1.1 6.6 3.9 9.4"/></svg></span></span></div>
<div class="cell r2" style="left:108.0px;top:815.0px;width:69.0px;height:48.0px;background:#fff;border-color:#8eaadb;"></div>
<div class="cell r2" style="left:176.0px;top:216.0px;width:188.0px;height:48.0px;background:#9cc2e5;border-color:#8eaadb;line-height:21.8px;"><span><span class="cj" style="min-width:4em">加工中心</span><span class="hg"><svg class="pm " viewBox="0 0 10 10"><path d="M6.9 .9h1.8v5.7H1.1M3.9 3.8 1.1 6.6 3.9 9.4"/></svg></span></span></div>
<div class="cell r2" style="left:363.0px;top:216.0px;width:117.0px;height:48.0px;background:#9cc2e5;border-color:#8eaadb;line-height:21.8px;"><span><span class="ln">JOYOU-PRV-</span><br><span class="sf">1060</span><span class="hg"><svg class="pm " viewBox="0 0 10 10"><path d="M6.9 .9h1.8v5.7H1.1M3.9 3.8 1.1 6.6 3.9 9.4"/></svg></span></span></div>
<div class="cell r2" style="left:479.0px;top:216.0px;width:144.0px;height:48.0px;background:#9cc2e5;border-color:#8eaadb;line-height:21.8px;"><span><span class="sf">1</span><span class="cj1">台</span><span class="hg"><svg class="pm " viewBox="0 0 10 10"><path d="M6.9 .9h1.8v5.7H1.1M3.9 3.8 1.1 6.6 3.9 9.4"/></svg></span></span></div>
<div class="cell r2" style="left:622.0px;top:216.0px;width:118.0px;height:48.0px;background:#9cc2e5;border-color:#8eaadb;line-height:21.8px;"><span><span class="sf">8</span><span class="cj1">年</span><span class="hg"><svg class="pm " viewBox="0 0 10 10"><path d="M6.9 .9h1.8v5.7H1.1M3.9 3.8 1.1 6.6 3.9 9.4"/></svg></span></span></div>
<div class="cell r2" style="left:176.0px;top:263.0px;width:188.0px;height:46.0px;background:#fff;border-color:#8eaadb;line-height:21.8px;"><span><span class="cj" style="min-width:4em">加工中心</span><span class="hg"><svg class="pm " viewBox="0 0 10 10"><path d="M6.9 .9h1.8v5.7H1.1M3.9 3.8 1.1 6.6 3.9 9.4"/></svg></span></span></div>
<div class="cell r2" style="left:363.0px;top:263.0px;width:117.0px;height:46.0px;background:#fff;border-color:#8eaadb;line-height:21.8px;"><span><span class="ln">V</span><span class="sf">10</span><span class="hg"><svg class="pm " viewBox="0 0 10 10"><path d="M6.9 .9h1.8v5.7H1.1M3.9 3.8 1.1 6.6 3.9 9.4"/></svg></span></span></div>
<div class="cell r2" style="left:479.0px;top:263.0px;width:144.0px;height:46.0px;background:#fff;border-color:#8eaadb;line-height:21.8px;"><span><span class="sf">2</span><span class="cj1">台</span><span class="hg"><svg class="pm " viewBox="0 0 10 10"><path d="M6.9 .9h1.8v5.7H1.1M3.9 3.8 1.1 6.6 3.9 9.4"/></svg></span></span></div>
<div class="cell r2" style="left:622.0px;top:263.0px;width:118.0px;height:46.0px;background:#fff;border-color:#8eaadb;line-height:21.8px;"><span><span class="sf">11</span><span class="cj1">年</span><span class="hg"><svg class="pm " viewBox="0 0 10 10"><path d="M6.9 .9h1.8v5.7H1.1M3.9 3.8 1.1 6.6 3.9 9.4"/></svg></span></span></div>
<div class="cell r2" style="left:176.0px;top:308.0px;width:188.0px;height:47.0px;background:#9cc2e5;border-color:#8eaadb;line-height:21.8px;"><span><span class="cj" style="min-width:4em">立式热丝</span><span class="du"><span class="cj" style="min-width:3em">堆焊机</span></span><span class="hg"><svg class="pm " viewBox="0 0 10 10"><path d="M6.9 .9h1.8v5.7H1.1M3.9 3.8 1.1 6.6 3.9 9.4"/></svg></span></span></div>
<div class="cell r2" style="left:363.0px;top:308.0px;width:117.0px;height:47.0px;background:#9cc2e5;border-color:#8eaadb;line-height:21.8px;"><span><span class="ln">SCH-</span><span class="sf">1500</span><span class="hg"><svg class="pm " viewBox="0 0 10 10"><path d="M6.9 .9h1.8v5.7H1.1M3.9 3.8 1.1 6.6 3.9 9.4"/></svg></span></span></div>
<div class="cell r2" style="left:479.0px;top:308.0px;width:144.0px;height:47.0px;background:#9cc2e5;border-color:#8eaadb;line-height:21.8px;"><span><span class="sf">1</span><span class="cj1">台</span><span class="hg"><svg class="pm " viewBox="0 0 10 10"><path d="M6.9 .9h1.8v5.7H1.1M3.9 3.8 1.1 6.6 3.9 9.4"/></svg></span></span></div>
<div class="cell r2" style="left:622.0px;top:308.0px;width:118.0px;height:47.0px;background:#9cc2e5;border-color:#8eaadb;line-height:21.8px;"><span><span class="sf">3</span><span class="cj1">年</span><span class="hg"><svg class="pm " viewBox="0 0 10 10"><path d="M6.9 .9h1.8v5.7H1.1M3.9 3.8 1.1 6.6 3.9 9.4"/></svg></span></span></div>
<div class="cell r2" style="left:176.0px;top:354.0px;width:188.0px;height:47.0px;background:#fff;border-color:#8eaadb;line-height:21.8px;"><span><span class="cj" style="min-width:8em">自动控温热处理炉</span><span class="hg"><svg class="pm " viewBox="0 0 10 10"><path d="M6.9 .9h1.8v5.7H1.1M3.9 3.8 1.1 6.6 3.9 9.4"/></svg></span><br><span class="cj" style="min-width:8em">（台车式电阻炉）</span><span class="hg"><svg class="pm " viewBox="0 0 10 10"><path d="M6.9 .9h1.8v5.7H1.1M3.9 3.8 1.1 6.6 3.9 9.4"/></svg></span></span></div>
<div class="cell r2" style="left:363.0px;top:354.0px;width:117.0px;height:47.0px;background:#fff;border-color:#8eaadb;line-height:21.8px;"><span><span class="ln">WX</span><span class="sf">3-15-9</span><span class="hg"><svg class="pm " viewBox="0 0 10 10"><path d="M6.9 .9h1.8v5.7H1.1M3.9 3.8 1.1 6.6 3.9 9.4"/></svg></span></span></div>
<div class="cell r2" style="left:479.0px;top:354.0px;width:144.0px;height:47.0px;background:#fff;border-color:#8eaadb;line-height:21.8px;"><span><span class="sf">1</span><span class="cj1">台</span><span class="hg"><svg class="pm " viewBox="0 0 10 10"><path d="M6.9 .9h1.8v5.7H1.1M3.9 3.8 1.1 6.6 3.9 9.4"/></svg></span></span></div>
<div class="cell r2" style="left:622.0px;top:354.0px;width:118.0px;height:47.0px;background:#fff;border-color:#8eaadb;line-height:21.8px;"><span><span class="sf">12</span><span class="cj1">年</span><span class="hg"><svg class="pm " viewBox="0 0 10 10"><path d="M6.9 .9h1.8v5.7H1.1M3.9 3.8 1.1 6.6 3.9 9.4"/></svg></span></span></div>
<div class="cell r2" style="left:176.0px;top:400.0px;width:188.0px;height:47.0px;background:#9cc2e5;border-color:#8eaadb;line-height:21.8px;"><span><span class="cj" style="min-width:8em">自动控温热处理炉</span><span class="hg"><svg class="pm " viewBox="0 0 10 10"><path d="M6.9 .9h1.8v5.7H1.1M3.9 3.8 1.1 6.6 3.9 9.4"/></svg></span><br><span class="cj" style="min-width:8em">（全纤维台车炉）</span><span class="hg"><svg class="pm " viewBox="0 0 10 10"><path d="M6.9 .9h1.8v5.7H1.1M3.9 3.8 1.1 6.6 3.9 9.4"/></svg></span></span></div>
<div class="cell r2" style="left:363.0px;top:400.0px;width:117.0px;height:47.0px;background:#9cc2e5;border-color:#8eaadb;line-height:21.8px;"><span><span class="sf">120</span><span class="ln">KW</span><span class="hg"><svg class="pm " viewBox="0 0 10 10"><path d="M6.9 .9h1.8v5.7H1.1M3.9 3.8 1.1 6.6 3.9 9.4"/></svg></span></span></div>
<div class="cell r2" style="left:479.0px;top:400.0px;width:144.0px;height:47.0px;background:#9cc2e5;border-color:#8eaadb;line-height:21.8px;"><span><span class="sf">1</span><span class="cj1">台</span><span class="hg"><svg class="pm " viewBox="0 0 10 10"><path d="M6.9 .9h1.8v5.7H1.1M3.9 3.8 1.1 6.6 3.9 9.4"/></svg></span></span></div>
<div class="cell r2" style="left:622.0px;top:400.0px;width:118.0px;height:47.0px;background:#9cc2e5;border-color:#8eaadb;line-height:21.8px;"><span><span class="sf">12</span><span class="cj1">年</span><span class="hg"><svg class="pm " viewBox="0 0 10 10"><path d="M6.9 .9h1.8v5.7H1.1M3.9 3.8 1.1 6.6 3.9 9.4"/></svg></span></span></div>
<div class="cell r2" style="left:176.0px;top:446.0px;width:188.0px;height:48.0px;background:#fff;border-color:#8eaadb;line-height:21.8px;"><span><span class="cj" style="min-width:7em">超音速喷涂设备</span><span class="hg"><svg class="pm " viewBox="0 0 10 10"><path d="M6.9 .9h1.8v5.7H1.1M3.9 3.8 1.1 6.6 3.9 9.4"/></svg></span></span></div>
<div class="cell r2" style="left:363.0px;top:446.0px;width:117.0px;height:48.0px;background:#fff;border-color:#8eaadb;line-height:21.8px;"><span><span class="ln">SCH-</span><span class="sf">1500</span><span class="hg"><svg class="pm " viewBox="0 0 10 10"><path d="M6.9 .9h1.8v5.7H1.1M3.9 3.8 1.1 6.6 3.9 9.4"/></svg></span></span></div>
<div class="cell r2" style="left:479.0px;top:446.0px;width:144.0px;height:48.0px;background:#fff;border-color:#8eaadb;line-height:21.8px;"><span><span class="sf">1</span><span class="cj1">台</span><span class="hg"><svg class="pm " viewBox="0 0 10 10"><path d="M6.9 .9h1.8v5.7H1.1M3.9 3.8 1.1 6.6 3.9 9.4"/></svg></span></span></div>
<div class="cell r2" style="left:622.0px;top:446.0px;width:118.0px;height:48.0px;background:#fff;border-color:#8eaadb;line-height:21.8px;"><span><span class="sf">3</span><span class="cj1">年</span><span class="hg"><svg class="pm " viewBox="0 0 10 10"><path d="M6.9 .9h1.8v5.7H1.1M3.9 3.8 1.1 6.6 3.9 9.4"/></svg></span></span></div>
<div class="cell r2" style="left:176.0px;top:493.0px;width:188.0px;height:47.0px;background:#9cc2e5;border-color:#8eaadb;line-height:21.8px;"><span><span class="cj" style="min-width:4em">平面磨床</span><span class="hg"><svg class="pm " viewBox="0 0 10 10"><path d="M6.9 .9h1.8v5.7H1.1M3.9 3.8 1.1 6.6 3.9 9.4"/></svg></span></span></div>
<div class="cell r2" style="left:363.0px;top:493.0px;width:117.0px;height:47.0px;background:#9cc2e5;border-color:#8eaadb;line-height:21.8px;"><span><span class="ln">M</span><span class="sf">7140</span><span class="ln">H</span><span class="hg"><svg class="pm " viewBox="0 0 10 10"><path d="M6.9 .9h1.8v5.7H1.1M3.9 3.8 1.1 6.6 3.9 9.4"/></svg></span></span></div>
<div class="cell r2" style="left:479.0px;top:493.0px;width:144.0px;height:47.0px;background:#9cc2e5;border-color:#8eaadb;line-height:21.8px;"><span><span class="sf">1</span><span class="cj1">台</span><span class="hg"><svg class="pm " viewBox="0 0 10 10"><path d="M6.9 .9h1.8v5.7H1.1M3.9 3.8 1.1 6.6 3.9 9.4"/></svg></span></span></div>
<div class="cell r2" style="left:622.0px;top:493.0px;width:118.0px;height:47.0px;background:#9cc2e5;border-color:#8eaadb;line-height:21.8px;"><span><span class="sf">11</span><span class="cj1">年</span><span class="hg"><svg class="pm " viewBox="0 0 10 10"><path d="M6.9 .9h1.8v5.7H1.1M3.9 3.8 1.1 6.6 3.9 9.4"/></svg></span></span></div>
<div class="cell r2" style="left:176.0px;top:539.0px;width:188.0px;height:47.0px;background:#fff;border-color:#8eaadb;line-height:21.8px;"><span><span class="cj" style="min-width:2em">数控</span><span class="sq"><span class="cj1">珩</span></span><span class="cj" style="min-width:2em">磨机</span><span class="hg"><svg class="pm " viewBox="0 0 10 10"><path d="M6.9 .9h1.8v5.7H1.1M3.9 3.8 1.1 6.6 3.9 9.4"/></svg></span></span></div>
<div class="cell r2" style="left:363.0px;top:539.0px;width:117.0px;height:47.0px;background:#fff;border-color:#8eaadb;line-height:21.8px;"><span><span class="ln">GPC-</span><span class="sf">30</span><span class="ln">B</span><span class="sf">40</span><span class="hg"><svg class="pm " viewBox="0 0 10 10"><path d="M6.9 .9h1.8v5.7H1.1M3.9 3.8 1.1 6.6 3.9 9.4"/></svg></span></span></div>
<div class="cell r2" style="left:479.0px;top:539.0px;width:144.0px;height:47.0px;background:#fff;border-color:#8eaadb;line-height:21.8px;"><span><span class="sf">1</span><span class="cj1">台</span><span class="hg"><svg class="pm " viewBox="0 0 10 10"><path d="M6.9 .9h1.8v5.7H1.1M3.9 3.8 1.1 6.6 3.9 9.4"/></svg></span></span></div>
<div class="cell r2" style="left:622.0px;top:539.0px;width:118.0px;height:47.0px;background:#fff;border-color:#8eaadb;line-height:21.8px;"><span><span class="sf">14</span><span class="cj1">年</span><span class="hg"><svg class="pm " viewBox="0 0 10 10"><path d="M6.9 .9h1.8v5.7H1.1M3.9 3.8 1.1 6.6 3.9 9.4"/></svg></span></span></div>
<div class="cell r2" style="left:176.0px;top:585.0px;width:188.0px;height:47.0px;background:#9cc2e5;border-color:#8eaadb;line-height:21.8px;"><span><span class="cj" style="min-width:4em">数控车床</span><span class="hg"><svg class="pm " viewBox="0 0 10 10"><path d="M6.9 .9h1.8v5.7H1.1M3.9 3.8 1.1 6.6 3.9 9.4"/></svg></span></span></div>
<div class="cell r2" style="left:363.0px;top:585.0px;width:117.0px;height:47.0px;background:#9cc2e5;border-color:#8eaadb;line-height:21.8px;"><span><span class="ln">CY-</span><br><span class="ln">K</span><span class="sf">510</span><span class="ln">n/</span><span class="sf">1000</span><span class="hg"><svg class="pm " viewBox="0 0 10 10"><path d="M6.9 .9h1.8v5.7H1.1M3.9 3.8 1.1 6.6 3.9 9.4"/></svg></span></span></div>
<div class="cell r2" style="left:479.0px;top:585.0px;width:144.0px;height:47.0px;background:#9cc2e5;border-color:#8eaadb;line-height:21.8px;"><span><span class="sf">2</span><span class="cj1">台</span><span class="hg"><svg class="pm " viewBox="0 0 10 10"><path d="M6.9 .9h1.8v5.7H1.1M3.9 3.8 1.1 6.6 3.9 9.4"/></svg></span></span></div>
<div class="cell r2" style="left:622.0px;top:585.0px;width:118.0px;height:47.0px;background:#9cc2e5;border-color:#8eaadb;line-height:21.8px;"><span><span class="sf">2</span><span class="cj1">年</span><span class="hg"><svg class="pm " viewBox="0 0 10 10"><path d="M6.9 .9h1.8v5.7H1.1M3.9 3.8 1.1 6.6 3.9 9.4"/></svg></span></span></div>
<div class="cell r2" style="left:176.0px;top:631.0px;width:188.0px;height:47.0px;background:#fff;border-color:#8eaadb;line-height:21.8px;"><span><span class="cj" style="min-width:4em">数控车床</span><span class="hg"><svg class="pm " viewBox="0 0 10 10"><path d="M6.9 .9h1.8v5.7H1.1M3.9 3.8 1.1 6.6 3.9 9.4"/></svg></span></span></div>
<div class="cell r2" style="left:363.0px;top:631.0px;width:117.0px;height:47.0px;background:#fff;border-color:#8eaadb;line-height:21.8px;"><span><span class="ln">CY-</span><br><span class="ln">K</span><span class="sf">510</span><span class="ln">n/</span><span class="sf">1000</span><span class="hg"><svg class="pm " viewBox="0 0 10 10"><path d="M6.9 .9h1.8v5.7H1.1M3.9 3.8 1.1 6.6 3.9 9.4"/></svg></span></span></div>
<div class="cell r2" style="left:479.0px;top:631.0px;width:144.0px;height:47.0px;background:#fff;border-color:#8eaadb;line-height:21.8px;"><span><span class="sf">2</span><span class="cj1">台</span><span class="hg"><svg class="pm " viewBox="0 0 10 10"><path d="M6.9 .9h1.8v5.7H1.1M3.9 3.8 1.1 6.6 3.9 9.4"/></svg></span></span></div>
<div class="cell r2" style="left:622.0px;top:631.0px;width:118.0px;height:47.0px;background:#fff;border-color:#8eaadb;line-height:21.8px;"><span><span class="sf">2</span><span class="cj1">年</span><span class="hg"><svg class="pm " viewBox="0 0 10 10"><path d="M6.9 .9h1.8v5.7H1.1M3.9 3.8 1.1 6.6 3.9 9.4"/></svg></span></span></div>
<div class="cell r2" style="left:176.0px;top:677.0px;width:188.0px;height:47.0px;background:#9cc2e5;border-color:#8eaadb;line-height:21.8px;"><span><span class="cj" style="min-width:4em">平面磨床</span><span class="hg"><svg class="pm " viewBox="0 0 10 10"><path d="M6.9 .9h1.8v5.7H1.1M3.9 3.8 1.1 6.6 3.9 9.4"/></svg></span></span></div>
<div class="cell r2" style="left:363.0px;top:677.0px;width:117.0px;height:47.0px;background:#9cc2e5;border-color:#8eaadb;line-height:21.8px;"><span><span class="ln">M</span><span class="sf">7140</span><span class="ln">H</span><span class="hg"><svg class="pm " viewBox="0 0 10 10"><path d="M6.9 .9h1.8v5.7H1.1M3.9 3.8 1.1 6.6 3.9 9.4"/></svg></span></span></div>
<div class="cell r2" style="left:479.0px;top:677.0px;width:144.0px;height:47.0px;background:#9cc2e5;border-color:#8eaadb;line-height:21.8px;"><span><span class="sf">1</span><span class="cj1">台</span><span class="hg"><svg class="pm " viewBox="0 0 10 10"><path d="M6.9 .9h1.8v5.7H1.1M3.9 3.8 1.1 6.6 3.9 9.4"/></svg></span></span></div>
<div class="cell r2" style="left:622.0px;top:677.0px;width:118.0px;height:47.0px;background:#9cc2e5;border-color:#8eaadb;line-height:21.8px;"><span><span class="sf">11</span><span class="cj1">年</span><span class="hg"><svg class="pm " viewBox="0 0 10 10"><path d="M6.9 .9h1.8v5.7H1.1M3.9 3.8 1.1 6.6 3.9 9.4"/></svg></span></span></div>
<div class="cell r2" style="left:176.0px;top:723.0px;width:188.0px;height:47.0px;background:#fff;border-color:#8eaadb;line-height:21.8px;"><span><span class="cj" style="min-width:7em">水密封试压装置</span><span class="hg"><svg class="pm " viewBox="0 0 10 10"><path d="M6.9 .9h1.8v5.7H1.1M3.9 3.8 1.1 6.6 3.9 9.4"/></svg></span><br><span class="cj1">（</span><span class="sf">0-200</span><span class="ln">MPa</span><span class="cj1">）</span><span class="hg"><svg class="pm " viewBox="0 0 10 10"><path d="M6.9 .9h1.8v5.7H1.1M3.9 3.8 1.1 6.6 3.9 9.4"/></svg></span></span></div>
<div class="cell r2" style="left:363.0px;top:723.0px;width:117.0px;height:47.0px;background:#fff;border-color:#8eaadb;line-height:21.8px;"><span><span class="ln">SY</span><span class="sf">200</span><span class="ln">Mpa</span><span class="hg"><svg class="pm " viewBox="0 0 10 10"><path d="M6.9 .9h1.8v5.7H1.1M3.9 3.8 1.1 6.6 3.9 9.4"/></svg></span></span></div>
<div class="cell r2" style="left:479.0px;top:723.0px;width:144.0px;height:47.0px;background:#fff;border-color:#8eaadb;line-height:21.8px;"><span><span class="sf">1</span><span class="cj1">台</span><span class="hg"><svg class="pm " viewBox="0 0 10 10"><path d="M6.9 .9h1.8v5.7H1.1M3.9 3.8 1.1 6.6 3.9 9.4"/></svg></span></span></div>
<div class="cell r2" style="left:622.0px;top:723.0px;width:118.0px;height:47.0px;background:#fff;border-color:#8eaadb;line-height:21.8px;"><span><span class="sf">14</span><span class="cj1">年</span><span class="hg"><svg class="pm " viewBox="0 0 10 10"><path d="M6.9 .9h1.8v5.7H1.1M3.9 3.8 1.1 6.6 3.9 9.4"/></svg></span></span></div>
<div class="cell r2" style="left:176.0px;top:769.0px;width:188.0px;height:47.0px;background:#9cc2e5;border-color:#8eaadb;line-height:21.8px;"><span><span class="cj" style="min-width:7em">气密封试压装置</span><span class="hg"><svg class="pm " viewBox="0 0 10 10"><path d="M6.9 .9h1.8v5.7H1.1M3.9 3.8 1.1 6.6 3.9 9.4"/></svg></span><br><span class="cj1">（</span><span class="sf">0-200</span><span class="ln">MPa</span><span class="cj1">）</span><span class="hg"><svg class="pm " viewBox="0 0 10 10"><path d="M6.9 .9h1.8v5.7H1.1M3.9 3.8 1.1 6.6 3.9 9.4"/></svg></span></span></div>
<div class="cell r2" style="left:363.0px;top:769.0px;width:117.0px;height:47.0px;background:#9cc2e5;border-color:#8eaadb;line-height:21.8px;"><span><span class="ln">QST</span><span class="hg"><svg class="pm " viewBox="0 0 10 10"><path d="M6.9 .9h1.8v5.7H1.1M3.9 3.8 1.1 6.6 3.9 9.4"/></svg></span></span></div>
<div class="cell r2" style="left:479.0px;top:769.0px;width:144.0px;height:47.0px;background:#9cc2e5;border-color:#8eaadb;line-height:21.8px;"><span><span class="sf">1</span><span class="cj1">台</span><span class="hg"><svg class="pm " viewBox="0 0 10 10"><path d="M6.9 .9h1.8v5.7H1.1M3.9 3.8 1.1 6.6 3.9 9.4"/></svg></span></span></div>
<div class="cell r2" style="left:622.0px;top:769.0px;width:118.0px;height:47.0px;background:#9cc2e5;border-color:#8eaadb;line-height:21.8px;"><span><span class="sf">15</span><span class="cj1">年</span><span class="hg"><svg class="pm " viewBox="0 0 10 10"><path d="M6.9 .9h1.8v5.7H1.1M3.9 3.8 1.1 6.6 3.9 9.4"/></svg></span></span></div>
<div class="cell r2" style="left:176.0px;top:815.0px;width:188.0px;height:48.0px;background:#fff;border-color:#8eaadb;line-height:21.8px;"></div>
<div class="cell r2" style="left:363.0px;top:815.0px;width:117.0px;height:48.0px;background:#fff;border-color:#8eaadb;line-height:21.8px;"></div>
<div class="cell r2" style="left:479.0px;top:815.0px;width:144.0px;height:48.0px;background:#fff;border-color:#8eaadb;line-height:21.8px;"></div>
<div class="cell r2" style="left:622.0px;top:815.0px;width:118.0px;height:48.0px;background:#fff;border-color:#8eaadb;line-height:21.8px;"></div>
<div class="cell r2" style="left:739.0px;top:216.0px;width:101.0px;height:370.0px;background:#9cc2e5;border-color:#8eaadb;line-height:21.8px;"><span><span class="cj" style="min-width:4em">维修加工</span><br><span class="cj" style="min-width:4em">制造设备</span><span class="hg"><svg class="pm " viewBox="0 0 10 10"><path d="M6.9 .9h1.8v5.7H1.1M3.9 3.8 1.1 6.6 3.9 9.4"/></svg></span></span></div>
<div class="cell r2" style="left:739.0px;top:585.0px;width:101.0px;height:322.0px;background:#9cc2e5;border-color:#8eaadb;line-height:21.8px;"><span><span class="cj" style="min-width:4em">区域固定</span><br><span class="cj" style="min-width:4em">维修场地</span><br><span class="cj" style="min-width:4em">加工制造</span><br><span class="cj" style="min-width:2em">设备</span><span class="hg"><svg class="pm " viewBox="0 0 10 10"><path d="M6.9 .9h1.8v5.7H1.1M3.9 3.8 1.1 6.6 3.9 9.4"/></svg></span></span></div>
<div class="c" style="left:846.5px;top:181.0px;font-size:17px"><svg class="pm " viewBox="0 0 10 10"><path d="M6.9 .9h1.8v5.7H1.1M3.9 3.8 1.1 6.6 3.9 9.4"/></svg></div>
<div class="c" style="left:846.5px;top:226.5px;font-size:17px"><svg class="pm " viewBox="0 0 10 10"><path d="M6.9 .9h1.8v5.7H1.1M3.9 3.8 1.1 6.6 3.9 9.4"/></svg></div>
<div class="c" style="left:846.5px;top:273.5px;font-size:17px"><svg class="pm " viewBox="0 0 10 10"><path d="M6.9 .9h1.8v5.7H1.1M3.9 3.8 1.1 6.6 3.9 9.4"/></svg></div>
<div class="c" style="left:846.5px;top:318.5px;font-size:17px"><svg class="pm " viewBox="0 0 10 10"><path d="M6.9 .9h1.8v5.7H1.1M3.9 3.8 1.1 6.6 3.9 9.4"/></svg></div>
<div class="c" style="left:846.5px;top:364.5px;font-size:17px"><svg class="pm " viewBox="0 0 10 10"><path d="M6.9 .9h1.8v5.7H1.1M3.9 3.8 1.1 6.6 3.9 9.4"/></svg></div>
<div class="c" style="left:846.5px;top:410.5px;font-size:17px"><svg class="pm " viewBox="0 0 10 10"><path d="M6.9 .9h1.8v5.7H1.1M3.9 3.8 1.1 6.6 3.9 9.4"/></svg></div>
<div class="c" style="left:846.5px;top:456.5px;font-size:17px"><svg class="pm " viewBox="0 0 10 10"><path d="M6.9 .9h1.8v5.7H1.1M3.9 3.8 1.1 6.6 3.9 9.4"/></svg></div>
<div class="c" style="left:846.5px;top:503.5px;font-size:17px"><svg class="pm " viewBox="0 0 10 10"><path d="M6.9 .9h1.8v5.7H1.1M3.9 3.8 1.1 6.6 3.9 9.4"/></svg></div>
<div class="c" style="left:846.5px;top:549.5px;font-size:17px"><svg class="pm " viewBox="0 0 10 10"><path d="M6.9 .9h1.8v5.7H1.1M3.9 3.8 1.1 6.6 3.9 9.4"/></svg></div>
<div class="c" style="left:846.5px;top:595.5px;font-size:17px"><svg class="pm " viewBox="0 0 10 10"><path d="M6.9 .9h1.8v5.7H1.1M3.9 3.8 1.1 6.6 3.9 9.4"/></svg></div>
<div class="c" style="left:846.5px;top:641.5px;font-size:17px"><svg class="pm " viewBox="0 0 10 10"><path d="M6.9 .9h1.8v5.7H1.1M3.9 3.8 1.1 6.6 3.9 9.4"/></svg></div>
<div class="c" style="left:846.5px;top:687.5px;font-size:17px"><svg class="pm " viewBox="0 0 10 10"><path d="M6.9 .9h1.8v5.7H1.1M3.9 3.8 1.1 6.6 3.9 9.4"/></svg></div>
<div class="c" style="left:846.5px;top:733.5px;font-size:17px"><svg class="pm " viewBox="0 0 10 10"><path d="M6.9 .9h1.8v5.7H1.1M3.9 3.8 1.1 6.6 3.9 9.4"/></svg></div>
<div class="c" style="left:846.5px;top:779.5px;font-size:17px"><svg class="pm " viewBox="0 0 10 10"><path d="M6.9 .9h1.8v5.7H1.1M3.9 3.8 1.1 6.6 3.9 9.4"/></svg></div>
</div>
<div id="status">
<div class="l" style="left:11px;top:10.5px;font-size:12px;letter-spacing:.45px;color:#444"><span class="cj1">第</span> 235 <span class="cj" style="min-width:3em">页，共</span> 255 <span class="cj1">页</span></div>
<div class="l" style="left:148px;top:10.5px;font-size:12px;letter-spacing:.5px;color:#444">9/26230 <span class="cj" style="min-width:2em">个字</span></div>
<svg style="left:262px;top:3px" width="18" height="16" viewBox="0 0 18 16"><g fill="none" stroke="#555" stroke-width="1"><path d="M2.5 2.5h4.5v10h-4.5zM7 3.2l2.5-1.2v10l-2.5 1.2"/><path d="M11 3.2l3.4 3.6m0-3.6L11 6.8"/></g></svg>
<div class="l" style="left:295px;top:10.5px;font-size:12px;color:#444"><span class="cj" style="min-width:4em">简体中文</span>(<span class="cj" style="min-width:4em">中国大陆</span>)</div>
<div class="l" style="left:417.5px;top:10.5px;font-size:12px;color:#444"><span class="cj" style="min-width:2em">修订</span>: <span class="cj" style="min-width:2em">关闭</span></div>
<svg style="left:490px;top:2px" width="18" height="18" viewBox="0 0 18 18"><g fill="none" stroke="#555" stroke-width="1.1"><circle cx="9" cy="3.6" r="1.5"/><path d="M3.2 7.2c3 1.2 5.4 1.2 6.6 0M6.8 8.2l-1.2 6.2M9.2 9.6l3.4 3.4M9.8 13.6l4.6-4.6m-4.6 0l4.6 4.6" /></g></svg>
<div class="l" style="left:510px;top:10.5px;font-size:12px;color:#444;font-weight:bold"><span class="cj" style="min-width:4em">辅助功能</span>: <span class="cj" style="min-width:2em">调查</span></div>
</div>
</body></html>
